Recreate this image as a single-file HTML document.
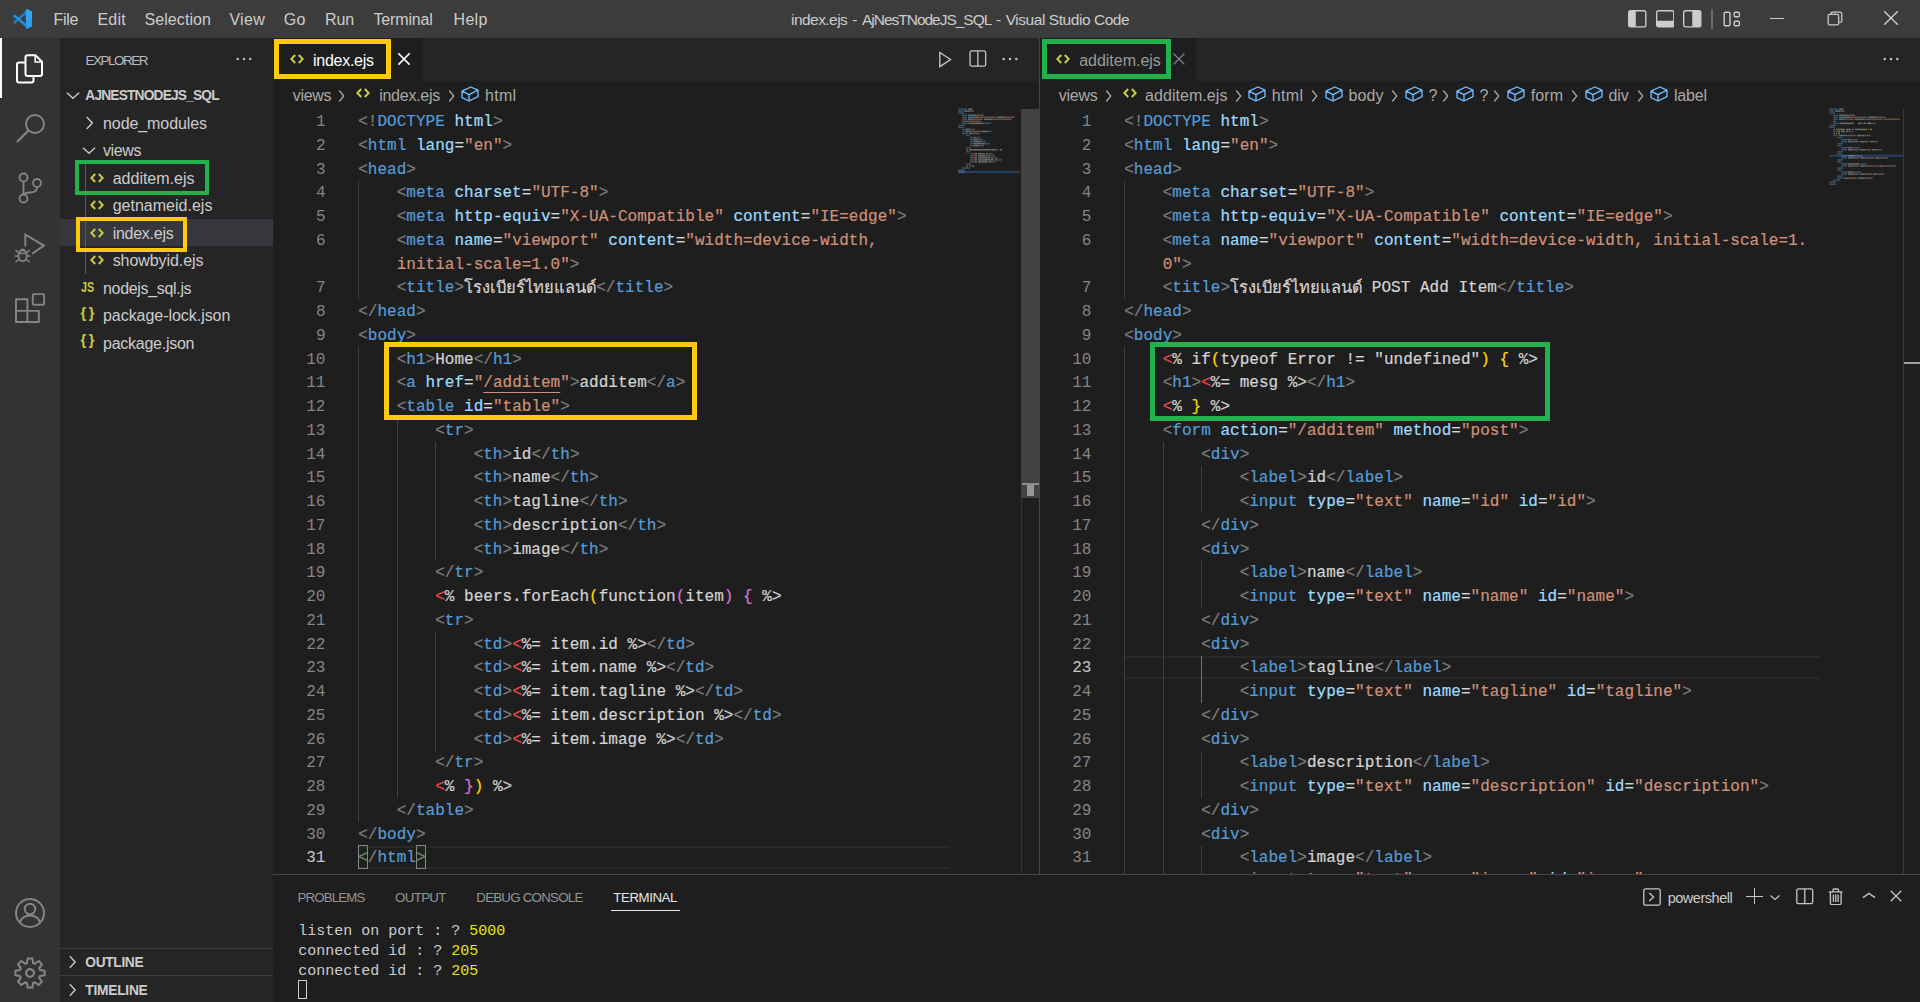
<!DOCTYPE html>
<html lang="en"><head><meta charset="utf-8"><title>index.ejs - AjNesTNodeJS_SQL - Visual Studio Code</title>
<style>
*{box-sizing:border-box;margin:0;padding:0}
html,body{width:1920px;height:1002px;overflow:hidden;background:#1e1e1e}
body{position:relative;font-family:"Liberation Sans",sans-serif;color:#ccc}
.abs{position:absolute;display:block}
.t{position:absolute;white-space:pre;font-family:"Liberation Sans",sans-serif}
.ed{position:absolute;overflow:hidden;background:#1e1e1e}
.cl{-webkit-text-stroke:0.2px;position:absolute;white-space:pre;font-family:"Liberation Mono",monospace;font-size:16px;line-height:23.75px;height:23.75px;letter-spacing:0.018px;color:#d4d4d4}
.ln{position:absolute;white-space:pre;font-family:"Liberation Mono",monospace;font-size:16px;line-height:23.75px;height:23.75px;letter-spacing:0.018px;text-align:right}
.th{display:inline-block;width:132.2px;height:23.75px;overflow:hidden;vertical-align:top;white-space:nowrap;letter-spacing:0;font-size:16.5px;line-height:23.75px}
.lk{text-decoration:underline;text-underline-offset:5px;text-decoration-thickness:1px}
.bm{display:inline-block;vertical-align:top;height:24px;margin-top:-2.6px;padding-top:2.6px;line-height:23.75px;outline:1px solid #888;outline-offset:-1px;background:rgba(0,100,0,.1)}
.tm{position:absolute;white-space:pre;font-family:"Liberation Mono",monospace;font-size:15px;line-height:20px;color:#ccc}
.box{position:absolute;border:5px solid #ffc90e}
.box.g{border-color:#22b14c}
</style></head><body>

<div class="abs" style="left:0;top:0;width:1920px;height:38px;background:#3c3c3c"></div>
<svg class="abs" style="left:11.7px;top:8.75px;" width="20.4" height="20" viewBox="0 0 245 240"><path d="M172 40 L22 168" stroke="#1a7fc8" stroke-width="31" fill="none"/><path d="M172 200 L22 76" stroke="#2490e0" stroke-width="31" fill="none"/><path d="M180 0 L245 33 V208 L180 240 L166 230 V10 Z" fill="#2d9ff0"/><path d="M180 0 L245 33 V120 L166 120 V10 Z" fill="#3aa8f5" opacity="0.6"/></svg>
<span class="t" style="left:53.40px;top:10.00px;font-size:16px;line-height:20px;color:#cccccc;letter-spacing:-0.245px;">File</span>
<span class="t" style="left:97.40px;top:10.00px;font-size:16px;line-height:20px;color:#cccccc;letter-spacing:0.232px;">Edit</span>
<span class="t" style="left:144.50px;top:10.00px;font-size:16px;line-height:20px;color:#cccccc;letter-spacing:0.076px;">Selection</span>
<span class="t" style="left:229.40px;top:10.00px;font-size:16px;line-height:20px;color:#cccccc;letter-spacing:0.330px;">View</span>
<span class="t" style="left:283.80px;top:10.00px;font-size:16px;line-height:20px;color:#cccccc;letter-spacing:0.228px;">Go</span>
<span class="t" style="left:325.00px;top:10.00px;font-size:16px;line-height:20px;color:#cccccc;letter-spacing:-0.117px;">Run</span>
<span class="t" style="left:373.40px;top:10.00px;font-size:16px;line-height:20px;color:#cccccc;letter-spacing:-0.142px;">Terminal</span>
<span class="t" style="left:453.60px;top:10.00px;font-size:16px;line-height:20px;color:#cccccc;letter-spacing:0.273px;">Help</span>
<span class="t" style="left:791.00px;top:10.00px;font-size:15.5px;line-height:20px;color:#cccccc;letter-spacing:-0.542px;">index.ejs</span>
<span class="t" style="left:852.20px;top:10.00px;font-size:15.5px;line-height:20px;color:#cccccc;letter-spacing:-0.162px;">-</span>
<span class="t" style="left:862.00px;top:10.00px;font-size:15.5px;line-height:20px;color:#cccccc;letter-spacing:-1.018px;">AjNesTNodeJS_SQL</span>
<span class="t" style="left:996.00px;top:10.00px;font-size:15.5px;line-height:20px;color:#cccccc;letter-spacing:-0.162px;">-</span>
<span class="t" style="left:1005.70px;top:10.00px;font-size:15.5px;line-height:20px;color:#cccccc;letter-spacing:-0.446px;">Visual Studio Code</span>
<svg class="abs" style="left:1628.3px;top:10.1px;" width="18.5" height="17.7" viewBox="0 0 19 18"><rect x="0.7" y="0.7" width="17.6" height="16.6" rx="2" fill="none" stroke="#cccccc" stroke-width="1.4"/><path d="M0.7 2.5 Q0.7 0.7 2.5 0.7 H8 V17.3 H2.5 Q0.7 17.3 0.7 15.5Z" fill="#cccccc"/></svg>
<svg class="abs" style="left:1655.8px;top:10.1px;" width="18.5" height="17.7" viewBox="0 0 19 18"><rect x="0.7" y="0.7" width="17.6" height="16.6" rx="2" fill="none" stroke="#cccccc" stroke-width="1.4"/><path d="M0.7 11 H18.3 V15.5 Q18.3 17.3 16.5 17.3 H2.5 Q0.7 17.3 0.7 15.5Z" fill="#cccccc"/></svg>
<svg class="abs" style="left:1683.4px;top:10.1px;" width="18.5" height="17.7" viewBox="0 0 19 18"><rect x="0.7" y="0.7" width="17.6" height="16.6" rx="2" fill="none" stroke="#cccccc" stroke-width="1.4"/><path d="M9.5 0.7 H16.5 Q18.3 0.7 18.3 2.5 V15.5 Q18.3 17.3 16.5 17.3 H9.5Z" fill="#cccccc"/></svg>
<div class="abs" style="left:1711px;top:9px;width:1.5px;height:20px;background:#6b6b6b"></div>
<svg class="abs" style="left:1723px;top:11px;" width="18" height="16" viewBox="0 0 18 16"><rect x="1.2" y="1.2" width="5.8" height="13.6" rx="1.3" fill="none" stroke="#cccccc" stroke-width="1.4"/><rect x="11.2" y="1.2" width="5.2" height="4.6" rx="1.2" fill="none" stroke="#cccccc" stroke-width="1.4"/><rect x="11.2" y="10.2" width="5.2" height="4.6" rx="1.2" fill="none" stroke="#cccccc" stroke-width="1.4"/></svg>
<div class="abs" style="left:1770px;top:18px;width:14px;height:1.3px;background:#ccc"></div>
<svg class="abs" style="left:1826.6px;top:11.2px;" width="16" height="15" viewBox="0 0 17 16"><rect x="1.2" y="3.6" width="11.2" height="11.2" rx="1.5" fill="none" stroke="#cccccc" stroke-width="1.3"/><path d="M4.2 3.4 V2.6 Q4.2 1.1 5.7 1.1 H14 Q15.7 1.1 15.7 2.8 V10.6 Q15.7 12 14.3 12 H12.6" fill="none" stroke="#cccccc" stroke-width="1.3"/></svg>
<svg class="abs" style="left:1881.3px;top:8.2px;" width="20" height="20" viewBox="0 0 20 20"><path d="M3.2 3.2 L16.8 16.8 M16.8 3.2 L3.2 16.8" fill="none" stroke="#d0d0d0" stroke-width="1.35"/></svg>
<div class="abs" style="left:0;top:38px;width:60px;height:964px;background:#333333"></div>
<div class="abs" style="left:0;top:38px;width:2px;height:60px;background:#ffffff"></div>
<svg class="abs" style="left:15px;top:54px;" width="29" height="30" viewBox="0 0 29 30"><path d="M10.5 7.5 V3.2 Q10.5 1.2 12.5 1.2 H20.5 L27 7.7 V20 Q27 22 25 22 H12.5 Q10.5 22 10.5 20 V7.5" fill="none" stroke="#fff" stroke-width="2"/><path d="M20.2 1.5 V8 H26.8" fill="none" stroke="#fff" stroke-width="1.6"/><path d="M10.2 8.5 H4 Q2 8.5 2 10.5 V26.5 Q2 28.5 4 28.5 H16.5 Q18.5 28.5 18.5 26.5 V22.3" fill="none" stroke="#fff" stroke-width="2"/></svg>
<svg class="abs" style="left:15px;top:112px;" width="32" height="32" viewBox="0 0 32 32"><circle cx="20" cy="12" r="9" fill="none" stroke="#858585" stroke-width="2"/><path d="M13.6 18.4 L2 30" stroke="#858585" stroke-width="2.2" fill="none"/></svg>
<svg class="abs" style="left:17px;top:172px;" width="26" height="32" viewBox="0 0 26 32"><circle cx="6.5" cy="5.5" r="4" fill="none" stroke="#858585" stroke-width="1.8"/><circle cx="6.5" cy="26.5" r="4" fill="none" stroke="#858585" stroke-width="1.8"/><circle cx="20" cy="11" r="4" fill="none" stroke="#858585" stroke-width="1.8"/><path d="M6.5 9.5 V22.5 M20 15 Q20 20.5 13 20.5 Q8 20.5 7 23" fill="none" stroke="#858585" stroke-width="1.8"/></svg>
<svg class="abs" style="left:14px;top:233px;" width="32" height="32" viewBox="0 0 32 32"><path d="M11.3 13.5 V1.6 L30 12.6 L18.3 20.6" fill="none" stroke="#858585" stroke-width="1.9" stroke-linejoin="miter"/><ellipse cx="8.6" cy="22.8" rx="4.1" ry="5.4" fill="none" stroke="#858585" stroke-width="1.7"/><path d="M4.8 20.6 H12.4 M0.8 23 H4.5 M12.7 23 H16.4 M1.6 17.2 L4.9 19.8 M15.6 17.2 L12.3 19.8 M1.6 29 L4.9 26.6 M15.6 29 L12.3 26.6 M5.8 17.8 Q8.6 14.8 11.4 17.8" fill="none" stroke="#858585" stroke-width="1.5"/></svg>
<svg class="abs" style="left:14px;top:292px;" width="32" height="32" viewBox="0 0 32 32"><path d="M2 7.3 H13.4 V18.9 H24.8 V30 H2 Z M2 18.9 H13.4 V30" fill="none" stroke="#858585" stroke-width="1.9" stroke-linejoin="round"/><rect x="18.8" y="2.1" width="11.3" height="10.6" rx="1.3" fill="none" stroke="#858585" stroke-width="1.9"/></svg>
<svg class="abs" style="left:14px;top:897px;" width="32" height="32" viewBox="0 0 32 32"><circle cx="16" cy="16" r="14" fill="none" stroke="#858585" stroke-width="2"/><circle cx="16" cy="12" r="5.3" fill="none" stroke="#858585" stroke-width="2"/><path d="M6 25.5 Q8 18.5 16 18.5 Q24 18.5 26 25.5" fill="none" stroke="#858585" stroke-width="2"/></svg>
<svg class="abs" style="left:13.8px;top:956.8px;" width="32" height="32" viewBox="0 0 32 32"><path d="M12.93 6.06 L13.64 1.39 L18.36 1.39 L19.07 6.06 L20.85 6.80 L24.66 4.00 L28.00 7.34 L25.20 11.15 L25.94 12.93 L30.61 13.64 L30.61 18.36 L25.94 19.07 L25.20 20.85 L28.00 24.66 L24.66 28.00 L20.85 25.20 L19.07 25.94 L18.36 30.61 L13.64 30.61 L12.93 25.94 L11.15 25.20 L7.34 28.00 L4.00 24.66 L6.80 20.85 L6.06 19.07 L1.39 18.36 L1.39 13.64 L6.06 12.93 L6.80 11.15 L4.00 7.34 L7.34 4.00 L11.15 6.80Z" fill="none" stroke="#858585" stroke-width="2" stroke-linejoin="round"/><circle cx="16" cy="16" r="3.9" fill="none" stroke="#858585" stroke-width="2.2"/></svg>
<div class="abs" style="left:60px;top:38px;width:213px;height:964px;background:#252526"></div>
<span class="t" style="left:85.50px;top:51.00px;font-size:13.5px;line-height:20px;color:#bbbbbb;letter-spacing:-1.503px;">EXPLORER</span>
<svg class="abs" style="left:229.2px;top:54.3px;" width="30" height="10" viewBox="0 0 30 10"><circle cx="8.8" cy="5" r="1.2" fill="#c5c5c5"/><circle cx="15.0" cy="5" r="1.2" fill="#c5c5c5"/><circle cx="21.2" cy="5" r="1.2" fill="#c5c5c5"/></svg>
<svg class="abs" style="left:62.5px;top:85.0px;" width="20" height="20" viewBox="0 0 20 20"><path d="M3.9000000000000004 7.7 L10 13.3 L16.1 7.7" fill="none" stroke="#c5c5c5" stroke-width="1.5"/></svg>
<span class="t" style="left:85.30px;top:86.00px;font-size:13.75px;line-height:20px;color:#cccccc;letter-spacing:-0.825px;font-weight:bold;">AJNESTNODEJS_SQL</span>
<div class="abs" style="left:60px;top:219.3px;width:213px;height:27.2px;background:#37373d"></div>
<div class="abs" style="left:85px;top:164px;width:1px;height:110px;background:#585858"></div>
<svg class="abs" style="left:79.3px;top:113.3px;" width="20" height="20" viewBox="0 0 20 20"><path d="M7.7 4.1 L13.3 10 L7.7 15.9" fill="none" stroke="#c5c5c5" stroke-width="1.5"/></svg>
<span class="t" style="left:103.00px;top:114.00px;font-size:16px;line-height:20px;color:#cccccc;letter-spacing:-0.081px;">node_modules</span>
<svg class="abs" style="left:79.3px;top:140.3px;" width="20" height="20" viewBox="0 0 20 20"><path d="M3.9000000000000004 7.7 L10 13.3 L16.1 7.7" fill="none" stroke="#c5c5c5" stroke-width="1.5"/></svg>
<span class="t" style="left:103.00px;top:141.00px;font-size:16px;line-height:20px;color:#cccccc;letter-spacing:-0.402px;">views</span>
<svg class="abs" style="left:89.7px;top:172.7px;" width="14.0" height="10.0" viewBox="0 0 14 10"><path d="M5.2 1 L1.3 5 L5.2 9 M8.8 1 L12.7 5 L8.8 9" fill="none" stroke="#cbcb41" stroke-width="2"/></svg>
<span class="t" style="left:112.70px;top:169.00px;font-size:16px;line-height:20px;color:#cccccc;letter-spacing:-0.002px;">additem.ejs</span>
<svg class="abs" style="left:89.7px;top:200.0px;" width="14.0" height="10.0" viewBox="0 0 14 10"><path d="M5.2 1 L1.3 5 L5.2 9 M8.8 1 L12.7 5 L8.8 9" fill="none" stroke="#cbcb41" stroke-width="2"/></svg>
<span class="t" style="left:112.70px;top:196.00px;font-size:16px;line-height:20px;color:#cccccc;letter-spacing:0.006px;">getnameid.ejs</span>
<svg class="abs" style="left:89.7px;top:227.5px;" width="14.0" height="10.0" viewBox="0 0 14 10"><path d="M5.2 1 L1.3 5 L5.2 9 M8.8 1 L12.7 5 L8.8 9" fill="none" stroke="#cbcb41" stroke-width="2"/></svg>
<span class="t" style="left:112.70px;top:224.00px;font-size:16px;line-height:20px;color:#cccccc;letter-spacing:-0.272px;">index.ejs</span>
<svg class="abs" style="left:89.7px;top:255.0px;" width="14.0" height="10.0" viewBox="0 0 14 10"><path d="M5.2 1 L1.3 5 L5.2 9 M8.8 1 L12.7 5 L8.8 9" fill="none" stroke="#cbcb41" stroke-width="2"/></svg>
<span class="t" style="left:112.70px;top:251.00px;font-size:16px;line-height:20px;color:#cccccc;letter-spacing:-0.067px;">showbyid.ejs</span>
<span class="t" style="left:81.00px;top:277.00px;font-size:14.5px;line-height:20px;color:#cbcb41;letter-spacing:0.000px;font-weight:bold;transform-origin:0 50%;transform:scaleX(.74);">JS</span>
<span class="t" style="left:103.00px;top:279.00px;font-size:16px;line-height:20px;color:#cccccc;letter-spacing:-0.323px;">nodejs_sql.js</span>
<span class="t" style="left:80.60px;top:303.00px;font-size:14.5px;line-height:20px;color:#cbcb41;letter-spacing:1.257px;font-weight:bold;letter-spacing:2.5px;">{}</span>
<span class="t" style="left:103.00px;top:306.00px;font-size:16px;line-height:20px;color:#cccccc;letter-spacing:-0.045px;">package-lock.json</span>
<span class="t" style="left:80.60px;top:330.00px;font-size:14.5px;line-height:20px;color:#cbcb41;letter-spacing:1.257px;font-weight:bold;letter-spacing:2.5px;">{}</span>
<span class="t" style="left:103.00px;top:334.00px;font-size:16px;line-height:20px;color:#cccccc;letter-spacing:-0.257px;">package.json</span>
<div class="abs" style="left:60px;top:948px;width:213px;height:1px;background:#3c3c3c"></div>
<div class="abs" style="left:60px;top:975px;width:213px;height:1px;background:#3c3c3c"></div>
<svg class="abs" style="left:62.400000000000006px;top:952px;" width="20" height="20" viewBox="0 0 20 20"><path d="M7.85 4.2 L13.15 10 L7.85 15.8" fill="none" stroke="#c5c5c5" stroke-width="1.4"/></svg>
<span class="t" style="left:85.30px;top:953.00px;font-size:13.75px;line-height:20px;color:#cccccc;letter-spacing:-0.335px;font-weight:bold;">OUTLINE</span>
<svg class="abs" style="left:62.400000000000006px;top:979.6px;" width="20" height="20" viewBox="0 0 20 20"><path d="M7.85 4.2 L13.15 10 L7.85 15.8" fill="none" stroke="#c5c5c5" stroke-width="1.4"/></svg>
<span class="t" style="left:85.30px;top:981.00px;font-size:13.75px;line-height:20px;color:#cccccc;letter-spacing:-0.246px;font-weight:bold;">TIMELINE</span>
<div class="abs" style="left:273px;top:38px;width:766px;height:43px;background:#252526"></div>
<div class="abs" style="left:273px;top:38px;width:149px;height:43px;background:#1e1e1e"></div>
<svg class="abs" style="left:290.0px;top:54.3px;" width="14.0" height="10.0" viewBox="0 0 14 10"><path d="M5.2 1 L1.3 5 L5.2 9 M8.8 1 L12.7 5 L8.8 9" fill="none" stroke="#cbcb41" stroke-width="2"/></svg>
<span class="t" style="left:313.00px;top:51.00px;font-size:16px;line-height:20px;color:#ffffff;letter-spacing:-0.272px;">index.ejs</span>
<svg class="abs" style="left:394px;top:49.3px;" width="20" height="20" viewBox="0 0 20 20"><path d="M4.4 4.4 L15.6 15.6 M15.6 4.4 L4.4 15.6" fill="none" stroke="#ffffff" stroke-width="1.5"/></svg>
<svg class="abs" style="left:937.8px;top:50.8px;" width="14.4" height="17.1" viewBox="0 0 16 19"><path d="M2 1.6 L14 9.5 L2 17.4 Z" fill="none" stroke="#c5c5c5" stroke-width="1.5" stroke-linejoin="miter"/></svg>
<svg class="abs" style="left:969.3px;top:49.8px;" width="17.7" height="17.5" viewBox="0 0 18.5 18.5"><rect x="1" y="1" width="16.5" height="16" rx="1.8" fill="none" stroke="#c5c5c5" stroke-width="1.4"/><path d="M9.25 1 V17" stroke="#c5c5c5" stroke-width="1.4"/></svg>
<svg class="abs" style="left:995.2px;top:54.2px;" width="30" height="10" viewBox="0 0 30 10"><circle cx="8.7" cy="5" r="1.25" fill="#c5c5c5"/><circle cx="15.0" cy="5" r="1.25" fill="#c5c5c5"/><circle cx="21.3" cy="5" r="1.25" fill="#c5c5c5"/></svg>
<span class="t" style="left:292.80px;top:86.00px;font-size:16px;line-height:20px;color:#a9a9a9;letter-spacing:-0.322px;">views</span>
<svg class="abs" style="left:331.3px;top:85.5px;" width="20" height="20" viewBox="0 0 20 20"><path d="M8.25 4.5 L12.75 10 L8.25 15.5" fill="none" stroke="#a9a9a9" stroke-width="1.3"/></svg>
<svg class="abs" style="left:356.3px;top:87.8px;" width="14.0" height="10.0" viewBox="0 0 14 10"><path d="M5.2 1 L1.3 5 L5.2 9 M8.8 1 L12.7 5 L8.8 9" fill="none" stroke="#cbcb41" stroke-width="2"/></svg>
<span class="t" style="left:379.20px;top:86.00px;font-size:16px;line-height:20px;color:#a9a9a9;letter-spacing:-0.261px;">index.ejs</span>
<svg class="abs" style="left:440.6px;top:85.5px;" width="20" height="20" viewBox="0 0 20 20"><path d="M8.25 4.5 L12.75 10 L8.25 15.5" fill="none" stroke="#a9a9a9" stroke-width="1.3"/></svg>
<svg class="abs" style="left:461.3px;top:86px;" width="18" height="16" viewBox="0 0 18 16"><path d="M1 5.2 L9.8 1 L17 4.2 L17 10.6 L8 15 L1 11.6 Z M1 5.2 L8 8.6 L17 4.2 M8 8.6 L8 15" fill="none" stroke="#75beff" stroke-width="1.35" stroke-linejoin="round"/></svg>
<span class="t" style="left:485.00px;top:86.00px;font-size:16px;line-height:20px;color:#a9a9a9;letter-spacing:0.268px;">html</span>
<div class="ed" style="left:273px;top:109.25px;width:766px;height:765.25px">
<div class="abs" style="left:86px;top:736.25px;width:591px;height:23.75px;border-top:2px solid #282828;border-bottom:2px solid #282828"></div>
<div class="abs" style="left:85.30px;top:71.25px;width:1px;height:118.75px;background:#404040"></div><div class="abs" style="left:85.30px;top:237.50px;width:1px;height:475.00px;background:#404040"></div><div class="abs" style="left:123.78px;top:308.75px;width:1px;height:380.00px;background:#404040"></div><div class="abs" style="left:162.26px;top:332.50px;width:1px;height:118.75px;background:#404040"></div><div class="abs" style="left:162.26px;top:522.50px;width:1px;height:118.75px;background:#404040"></div>
<div class="ln" style="top:1.75px;right:713.5px;color:#858585">1</div><div class="cl" style="top:1.75px;left:85.20px"><span style="color:#808080">&lt;!</span><span style="color:#569cd6">DOCTYPE</span><span style="color:#9cdcfe"> html</span><span style="color:#808080">&gt;</span></div><div class="ln" style="top:25.50px;right:713.5px;color:#858585">2</div><div class="cl" style="top:25.50px;left:85.20px"><span style="color:#808080">&lt;</span><span style="color:#569cd6">html</span><span style="color:#d4d4d4"> </span><span style="color:#9cdcfe">lang</span><span style="color:#d4d4d4">=</span><span style="color:#ce9178">&quot;en&quot;</span><span style="color:#808080">&gt;</span></div><div class="ln" style="top:49.25px;right:713.5px;color:#858585">3</div><div class="cl" style="top:49.25px;left:85.20px"><span style="color:#808080">&lt;</span><span style="color:#569cd6">head</span><span style="color:#808080">&gt;</span></div><div class="ln" style="top:73.00px;right:713.5px;color:#858585">4</div><div class="cl" style="top:73.00px;left:85.20px"><span style="color:#d4d4d4">    </span><span style="color:#808080">&lt;</span><span style="color:#569cd6">meta</span><span style="color:#d4d4d4"> </span><span style="color:#9cdcfe">charset</span><span style="color:#d4d4d4">=</span><span style="color:#ce9178">&quot;UTF-8&quot;</span><span style="color:#808080">&gt;</span></div><div class="ln" style="top:96.75px;right:713.5px;color:#858585">5</div><div class="cl" style="top:96.75px;left:85.20px"><span style="color:#d4d4d4">    </span><span style="color:#808080">&lt;</span><span style="color:#569cd6">meta</span><span style="color:#d4d4d4"> </span><span style="color:#9cdcfe">http-equiv</span><span style="color:#d4d4d4">=</span><span style="color:#ce9178">&quot;X-UA-Compatible&quot;</span><span style="color:#d4d4d4"> </span><span style="color:#9cdcfe">content</span><span style="color:#d4d4d4">=</span><span style="color:#ce9178">&quot;IE=edge&quot;</span><span style="color:#808080">&gt;</span></div><div class="ln" style="top:120.50px;right:713.5px;color:#858585">6</div><div class="cl" style="top:120.50px;left:85.20px"><span style="color:#d4d4d4">    </span><span style="color:#808080">&lt;</span><span style="color:#569cd6">meta</span><span style="color:#d4d4d4"> </span><span style="color:#9cdcfe">name</span><span style="color:#d4d4d4">=</span><span style="color:#ce9178">&quot;viewport&quot;</span><span style="color:#d4d4d4"> </span><span style="color:#9cdcfe">content</span><span style="color:#d4d4d4">=</span><span style="color:#ce9178">&quot;width=device-width, </span></div><div class="cl" style="top:144.25px;left:123.68px"><span style="color:#ce9178">initial-scale=1.0&quot;</span><span style="color:#808080">&gt;</span></div><div class="ln" style="top:168.00px;right:713.5px;color:#858585">7</div><div class="cl" style="top:168.00px;left:85.20px"><span style="color:#d4d4d4">    </span><span style="color:#808080">&lt;</span><span style="color:#569cd6">title</span><span style="color:#808080">&gt;</span><span class="th" style="color:#d4d4d4">โรงเบียร์ไทยแลนด์</span><span style="color:#808080">&lt;/</span><span style="color:#569cd6">title</span><span style="color:#808080">&gt;</span></div><div class="ln" style="top:191.75px;right:713.5px;color:#858585">8</div><div class="cl" style="top:191.75px;left:85.20px"><span style="color:#808080">&lt;/</span><span style="color:#569cd6">head</span><span style="color:#808080">&gt;</span></div><div class="ln" style="top:215.50px;right:713.5px;color:#858585">9</div><div class="cl" style="top:215.50px;left:85.20px"><span style="color:#808080">&lt;</span><span style="color:#569cd6">body</span><span style="color:#808080">&gt;</span></div><div class="ln" style="top:239.25px;right:713.5px;color:#858585">10</div><div class="cl" style="top:239.25px;left:85.20px"><span style="color:#d4d4d4">    </span><span style="color:#808080">&lt;</span><span style="color:#569cd6">h1</span><span style="color:#808080">&gt;</span><span style="color:#d4d4d4">Home</span><span style="color:#808080">&lt;/</span><span style="color:#569cd6">h1</span><span style="color:#808080">&gt;</span></div><div class="ln" style="top:263.00px;right:713.5px;color:#858585">11</div><div class="cl" style="top:263.00px;left:85.20px"><span style="color:#d4d4d4">    </span><span style="color:#808080">&lt;</span><span style="color:#569cd6">a</span><span style="color:#d4d4d4"> </span><span style="color:#9cdcfe">href</span><span style="color:#d4d4d4">=</span><span style="color:#ce9178">&quot;<span class="lk">/additem</span>&quot;</span><span style="color:#808080">&gt;</span><span style="color:#d4d4d4">additem</span><span style="color:#808080">&lt;/</span><span style="color:#569cd6">a</span><span style="color:#808080">&gt;</span></div><div class="ln" style="top:286.75px;right:713.5px;color:#858585">12</div><div class="cl" style="top:286.75px;left:85.20px"><span style="color:#d4d4d4">    </span><span style="color:#808080">&lt;</span><span style="color:#569cd6">table</span><span style="color:#d4d4d4"> </span><span style="color:#9cdcfe">id</span><span style="color:#d4d4d4">=</span><span style="color:#ce9178">&quot;table&quot;</span><span style="color:#808080">&gt;</span></div><div class="ln" style="top:310.50px;right:713.5px;color:#858585">13</div><div class="cl" style="top:310.50px;left:85.20px"><span style="color:#d4d4d4">        </span><span style="color:#808080">&lt;</span><span style="color:#569cd6">tr</span><span style="color:#808080">&gt;</span></div><div class="ln" style="top:334.25px;right:713.5px;color:#858585">14</div><div class="cl" style="top:334.25px;left:85.20px"><span style="color:#d4d4d4">            </span><span style="color:#808080">&lt;</span><span style="color:#569cd6">th</span><span style="color:#808080">&gt;</span><span style="color:#d4d4d4">id</span><span style="color:#808080">&lt;/</span><span style="color:#569cd6">th</span><span style="color:#808080">&gt;</span></div><div class="ln" style="top:358.00px;right:713.5px;color:#858585">15</div><div class="cl" style="top:358.00px;left:85.20px"><span style="color:#d4d4d4">            </span><span style="color:#808080">&lt;</span><span style="color:#569cd6">th</span><span style="color:#808080">&gt;</span><span style="color:#d4d4d4">name</span><span style="color:#808080">&lt;/</span><span style="color:#569cd6">th</span><span style="color:#808080">&gt;</span></div><div class="ln" style="top:381.75px;right:713.5px;color:#858585">16</div><div class="cl" style="top:381.75px;left:85.20px"><span style="color:#d4d4d4">            </span><span style="color:#808080">&lt;</span><span style="color:#569cd6">th</span><span style="color:#808080">&gt;</span><span style="color:#d4d4d4">tagline</span><span style="color:#808080">&lt;/</span><span style="color:#569cd6">th</span><span style="color:#808080">&gt;</span></div><div class="ln" style="top:405.50px;right:713.5px;color:#858585">17</div><div class="cl" style="top:405.50px;left:85.20px"><span style="color:#d4d4d4">            </span><span style="color:#808080">&lt;</span><span style="color:#569cd6">th</span><span style="color:#808080">&gt;</span><span style="color:#d4d4d4">description</span><span style="color:#808080">&lt;/</span><span style="color:#569cd6">th</span><span style="color:#808080">&gt;</span></div><div class="ln" style="top:429.25px;right:713.5px;color:#858585">18</div><div class="cl" style="top:429.25px;left:85.20px"><span style="color:#d4d4d4">            </span><span style="color:#808080">&lt;</span><span style="color:#569cd6">th</span><span style="color:#808080">&gt;</span><span style="color:#d4d4d4">image</span><span style="color:#808080">&lt;/</span><span style="color:#569cd6">th</span><span style="color:#808080">&gt;</span></div><div class="ln" style="top:453.00px;right:713.5px;color:#858585">19</div><div class="cl" style="top:453.00px;left:85.20px"><span style="color:#d4d4d4">        </span><span style="color:#808080">&lt;/</span><span style="color:#569cd6">tr</span><span style="color:#808080">&gt;</span></div><div class="ln" style="top:476.75px;right:713.5px;color:#858585">20</div><div class="cl" style="top:476.75px;left:85.20px"><span style="color:#d4d4d4">        </span><span style="color:#f44747">&lt;</span><span style="color:#d4d4d4">% beers.forEach</span><span style="color:#ffd700">(</span><span style="color:#d4d4d4">function</span><span style="color:#da70d6">(</span><span style="color:#d4d4d4">item</span><span style="color:#da70d6">)</span><span style="color:#d4d4d4"> </span><span style="color:#da70d6">{</span><span style="color:#d4d4d4"> %&gt;</span></div><div class="ln" style="top:500.50px;right:713.5px;color:#858585">21</div><div class="cl" style="top:500.50px;left:85.20px"><span style="color:#d4d4d4">        </span><span style="color:#808080">&lt;</span><span style="color:#569cd6">tr</span><span style="color:#808080">&gt;</span></div><div class="ln" style="top:524.25px;right:713.5px;color:#858585">22</div><div class="cl" style="top:524.25px;left:85.20px"><span style="color:#d4d4d4">            </span><span style="color:#808080">&lt;</span><span style="color:#569cd6">td</span><span style="color:#808080">&gt;</span><span style="color:#f44747">&lt;</span><span style="color:#d4d4d4">%= item.id %&gt;</span><span style="color:#808080">&lt;/</span><span style="color:#569cd6">td</span><span style="color:#808080">&gt;</span></div><div class="ln" style="top:548.00px;right:713.5px;color:#858585">23</div><div class="cl" style="top:548.00px;left:85.20px"><span style="color:#d4d4d4">            </span><span style="color:#808080">&lt;</span><span style="color:#569cd6">td</span><span style="color:#808080">&gt;</span><span style="color:#f44747">&lt;</span><span style="color:#d4d4d4">%= item.name %&gt;</span><span style="color:#808080">&lt;/</span><span style="color:#569cd6">td</span><span style="color:#808080">&gt;</span></div><div class="ln" style="top:571.75px;right:713.5px;color:#858585">24</div><div class="cl" style="top:571.75px;left:85.20px"><span style="color:#d4d4d4">            </span><span style="color:#808080">&lt;</span><span style="color:#569cd6">td</span><span style="color:#808080">&gt;</span><span style="color:#f44747">&lt;</span><span style="color:#d4d4d4">%= item.tagline %&gt;</span><span style="color:#808080">&lt;/</span><span style="color:#569cd6">td</span><span style="color:#808080">&gt;</span></div><div class="ln" style="top:595.50px;right:713.5px;color:#858585">25</div><div class="cl" style="top:595.50px;left:85.20px"><span style="color:#d4d4d4">            </span><span style="color:#808080">&lt;</span><span style="color:#569cd6">td</span><span style="color:#808080">&gt;</span><span style="color:#f44747">&lt;</span><span style="color:#d4d4d4">%= item.description %&gt;</span><span style="color:#808080">&lt;/</span><span style="color:#569cd6">td</span><span style="color:#808080">&gt;</span></div><div class="ln" style="top:619.25px;right:713.5px;color:#858585">26</div><div class="cl" style="top:619.25px;left:85.20px"><span style="color:#d4d4d4">            </span><span style="color:#808080">&lt;</span><span style="color:#569cd6">td</span><span style="color:#808080">&gt;</span><span style="color:#f44747">&lt;</span><span style="color:#d4d4d4">%= item.image %&gt;</span><span style="color:#808080">&lt;/</span><span style="color:#569cd6">td</span><span style="color:#808080">&gt;</span></div><div class="ln" style="top:643.00px;right:713.5px;color:#858585">27</div><div class="cl" style="top:643.00px;left:85.20px"><span style="color:#d4d4d4">        </span><span style="color:#808080">&lt;/</span><span style="color:#569cd6">tr</span><span style="color:#808080">&gt;</span></div><div class="ln" style="top:666.75px;right:713.5px;color:#858585">28</div><div class="cl" style="top:666.75px;left:85.20px"><span style="color:#d4d4d4">        </span><span style="color:#f44747">&lt;</span><span style="color:#d4d4d4">% </span><span style="color:#da70d6">}</span><span style="color:#ffd700">)</span><span style="color:#d4d4d4"> %&gt;</span></div><div class="ln" style="top:690.50px;right:713.5px;color:#858585">29</div><div class="cl" style="top:690.50px;left:85.20px"><span style="color:#d4d4d4">    </span><span style="color:#808080">&lt;/</span><span style="color:#569cd6">table</span><span style="color:#808080">&gt;</span></div><div class="ln" style="top:714.25px;right:713.5px;color:#858585">30</div><div class="cl" style="top:714.25px;left:85.20px"><span style="color:#808080">&lt;/</span><span style="color:#569cd6">body</span><span style="color:#808080">&gt;</span></div><div class="ln" style="top:738.00px;right:713.5px;color:#c6c6c6">31</div><div class="cl" style="top:738.00px;left:85.20px"><span style="color:#808080"><span class="bm">&lt;</span>/</span><span style="color:#569cd6">html</span><span style="color:#808080"><span class="bm">&gt;</span></span></div>
</div>
<svg class="abs" style="left:958px;top:108.2px" width="62" height="90" viewBox="0 0 62 90"><rect x="0" y="62.93" width="62" height="2" fill="#264f78" opacity="0.75"/><rect x="0" y="0.40" width="2" height="1.5" fill="#808080" opacity="0.42"/><rect x="2" y="0.40" width="7" height="1.5" fill="#569cd6" opacity="0.42"/><rect x="10" y="0.40" width="4" height="1.5" fill="#9cdcfe" opacity="0.42"/><rect x="14" y="0.40" width="1" height="1.5" fill="#808080" opacity="0.42"/><rect x="0" y="2.43" width="1" height="1.5" fill="#808080" opacity="0.42"/><rect x="1" y="2.43" width="4" height="1.5" fill="#569cd6" opacity="0.42"/><rect x="6" y="2.43" width="4" height="1.5" fill="#9cdcfe" opacity="0.42"/><rect x="10" y="2.43" width="1" height="1.5" fill="#d4d4d4" opacity="0.42"/><rect x="11" y="2.43" width="4" height="1.5" fill="#ce9178" opacity="0.42"/><rect x="15" y="2.43" width="1" height="1.5" fill="#808080" opacity="0.42"/><rect x="0" y="4.46" width="1" height="1.5" fill="#808080" opacity="0.42"/><rect x="1" y="4.46" width="4" height="1.5" fill="#569cd6" opacity="0.42"/><rect x="5" y="4.46" width="1" height="1.5" fill="#808080" opacity="0.42"/><rect x="4" y="6.49" width="1" height="1.5" fill="#808080" opacity="0.42"/><rect x="5" y="6.49" width="4" height="1.5" fill="#569cd6" opacity="0.42"/><rect x="10" y="6.49" width="7" height="1.5" fill="#9cdcfe" opacity="0.42"/><rect x="17" y="6.49" width="1" height="1.5" fill="#d4d4d4" opacity="0.42"/><rect x="18" y="6.49" width="7" height="1.5" fill="#ce9178" opacity="0.42"/><rect x="25" y="6.49" width="1" height="1.5" fill="#808080" opacity="0.42"/><rect x="4" y="8.52" width="1" height="1.5" fill="#808080" opacity="0.42"/><rect x="5" y="8.52" width="4" height="1.5" fill="#569cd6" opacity="0.42"/><rect x="10" y="8.52" width="10" height="1.5" fill="#9cdcfe" opacity="0.42"/><rect x="20" y="8.52" width="1" height="1.5" fill="#d4d4d4" opacity="0.42"/><rect x="21" y="8.52" width="17" height="1.5" fill="#ce9178" opacity="0.42"/><rect x="39" y="8.52" width="7" height="1.5" fill="#9cdcfe" opacity="0.42"/><rect x="46" y="8.52" width="1" height="1.5" fill="#d4d4d4" opacity="0.42"/><rect x="47" y="8.52" width="9" height="1.5" fill="#ce9178" opacity="0.42"/><rect x="56" y="8.52" width="1" height="1.5" fill="#808080" opacity="0.42"/><rect x="4" y="10.55" width="1" height="1.5" fill="#808080" opacity="0.42"/><rect x="5" y="10.55" width="4" height="1.5" fill="#569cd6" opacity="0.42"/><rect x="10" y="10.55" width="4" height="1.5" fill="#9cdcfe" opacity="0.42"/><rect x="14" y="10.55" width="1" height="1.5" fill="#d4d4d4" opacity="0.42"/><rect x="15" y="10.55" width="10" height="1.5" fill="#ce9178" opacity="0.42"/><rect x="26" y="10.55" width="7" height="1.5" fill="#9cdcfe" opacity="0.42"/><rect x="33" y="10.55" width="1" height="1.5" fill="#d4d4d4" opacity="0.42"/><rect x="34" y="10.55" width="20" height="1.5" fill="#ce9178" opacity="0.42"/><rect x="4" y="12.58" width="18" height="1.5" fill="#ce9178" opacity="0.42"/><rect x="22" y="12.58" width="1" height="1.5" fill="#808080" opacity="0.42"/><rect x="4" y="14.61" width="1" height="1.5" fill="#808080" opacity="0.42"/><rect x="5" y="14.61" width="5" height="1.5" fill="#569cd6" opacity="0.42"/><rect x="10" y="14.61" width="1" height="1.5" fill="#808080" opacity="0.42"/><rect x="11" y="14.61" width="14" height="1.5" fill="#d4d4d4" opacity="0.42"/><rect x="25" y="14.61" width="2" height="1.5" fill="#808080" opacity="0.42"/><rect x="27" y="14.61" width="5" height="1.5" fill="#569cd6" opacity="0.42"/><rect x="32" y="14.61" width="1" height="1.5" fill="#808080" opacity="0.42"/><rect x="0" y="16.64" width="2" height="1.5" fill="#808080" opacity="0.42"/><rect x="2" y="16.64" width="4" height="1.5" fill="#569cd6" opacity="0.42"/><rect x="6" y="16.64" width="1" height="1.5" fill="#808080" opacity="0.42"/><rect x="0" y="18.67" width="1" height="1.5" fill="#808080" opacity="0.42"/><rect x="1" y="18.67" width="4" height="1.5" fill="#569cd6" opacity="0.42"/><rect x="5" y="18.67" width="1" height="1.5" fill="#808080" opacity="0.42"/><rect x="4" y="20.70" width="1" height="1.5" fill="#808080" opacity="0.42"/><rect x="5" y="20.70" width="2" height="1.5" fill="#569cd6" opacity="0.42"/><rect x="7" y="20.70" width="1" height="1.5" fill="#808080" opacity="0.42"/><rect x="8" y="20.70" width="4" height="1.5" fill="#d4d4d4" opacity="0.42"/><rect x="12" y="20.70" width="2" height="1.5" fill="#808080" opacity="0.42"/><rect x="14" y="20.70" width="2" height="1.5" fill="#569cd6" opacity="0.42"/><rect x="16" y="20.70" width="1" height="1.5" fill="#808080" opacity="0.42"/><rect x="4" y="22.73" width="1" height="1.5" fill="#808080" opacity="0.42"/><rect x="5" y="22.73" width="1" height="1.5" fill="#569cd6" opacity="0.42"/><rect x="7" y="22.73" width="4" height="1.5" fill="#9cdcfe" opacity="0.42"/><rect x="11" y="22.73" width="1" height="1.5" fill="#d4d4d4" opacity="0.42"/><rect x="12" y="22.73" width="10" height="1.5" fill="#ce9178" opacity="0.42"/><rect x="22" y="22.73" width="1" height="1.5" fill="#808080" opacity="0.42"/><rect x="23" y="22.73" width="7" height="1.5" fill="#d4d4d4" opacity="0.42"/><rect x="30" y="22.73" width="2" height="1.5" fill="#808080" opacity="0.42"/><rect x="32" y="22.73" width="1" height="1.5" fill="#569cd6" opacity="0.42"/><rect x="33" y="22.73" width="1" height="1.5" fill="#808080" opacity="0.42"/><rect x="4" y="24.76" width="1" height="1.5" fill="#808080" opacity="0.42"/><rect x="5" y="24.76" width="5" height="1.5" fill="#569cd6" opacity="0.42"/><rect x="11" y="24.76" width="2" height="1.5" fill="#9cdcfe" opacity="0.42"/><rect x="13" y="24.76" width="1" height="1.5" fill="#d4d4d4" opacity="0.42"/><rect x="14" y="24.76" width="7" height="1.5" fill="#ce9178" opacity="0.42"/><rect x="21" y="24.76" width="1" height="1.5" fill="#808080" opacity="0.42"/><rect x="8" y="26.79" width="1" height="1.5" fill="#808080" opacity="0.42"/><rect x="9" y="26.79" width="2" height="1.5" fill="#569cd6" opacity="0.42"/><rect x="11" y="26.79" width="1" height="1.5" fill="#808080" opacity="0.42"/><rect x="12" y="28.82" width="1" height="1.5" fill="#808080" opacity="0.42"/><rect x="13" y="28.82" width="2" height="1.5" fill="#569cd6" opacity="0.42"/><rect x="15" y="28.82" width="1" height="1.5" fill="#808080" opacity="0.42"/><rect x="16" y="28.82" width="2" height="1.5" fill="#d4d4d4" opacity="0.42"/><rect x="18" y="28.82" width="2" height="1.5" fill="#808080" opacity="0.42"/><rect x="20" y="28.82" width="2" height="1.5" fill="#569cd6" opacity="0.42"/><rect x="22" y="28.82" width="1" height="1.5" fill="#808080" opacity="0.42"/><rect x="12" y="30.85" width="1" height="1.5" fill="#808080" opacity="0.42"/><rect x="13" y="30.85" width="2" height="1.5" fill="#569cd6" opacity="0.42"/><rect x="15" y="30.85" width="1" height="1.5" fill="#808080" opacity="0.42"/><rect x="16" y="30.85" width="4" height="1.5" fill="#d4d4d4" opacity="0.42"/><rect x="20" y="30.85" width="2" height="1.5" fill="#808080" opacity="0.42"/><rect x="22" y="30.85" width="2" height="1.5" fill="#569cd6" opacity="0.42"/><rect x="24" y="30.85" width="1" height="1.5" fill="#808080" opacity="0.42"/><rect x="12" y="32.88" width="1" height="1.5" fill="#808080" opacity="0.42"/><rect x="13" y="32.88" width="2" height="1.5" fill="#569cd6" opacity="0.42"/><rect x="15" y="32.88" width="1" height="1.5" fill="#808080" opacity="0.42"/><rect x="16" y="32.88" width="7" height="1.5" fill="#d4d4d4" opacity="0.42"/><rect x="23" y="32.88" width="2" height="1.5" fill="#808080" opacity="0.42"/><rect x="25" y="32.88" width="2" height="1.5" fill="#569cd6" opacity="0.42"/><rect x="27" y="32.88" width="1" height="1.5" fill="#808080" opacity="0.42"/><rect x="12" y="34.91" width="1" height="1.5" fill="#808080" opacity="0.42"/><rect x="13" y="34.91" width="2" height="1.5" fill="#569cd6" opacity="0.42"/><rect x="15" y="34.91" width="1" height="1.5" fill="#808080" opacity="0.42"/><rect x="16" y="34.91" width="11" height="1.5" fill="#d4d4d4" opacity="0.42"/><rect x="27" y="34.91" width="2" height="1.5" fill="#808080" opacity="0.42"/><rect x="29" y="34.91" width="2" height="1.5" fill="#569cd6" opacity="0.42"/><rect x="31" y="34.91" width="1" height="1.5" fill="#808080" opacity="0.42"/><rect x="12" y="36.94" width="1" height="1.5" fill="#808080" opacity="0.42"/><rect x="13" y="36.94" width="2" height="1.5" fill="#569cd6" opacity="0.42"/><rect x="15" y="36.94" width="1" height="1.5" fill="#808080" opacity="0.42"/><rect x="16" y="36.94" width="5" height="1.5" fill="#d4d4d4" opacity="0.42"/><rect x="21" y="36.94" width="2" height="1.5" fill="#808080" opacity="0.42"/><rect x="23" y="36.94" width="2" height="1.5" fill="#569cd6" opacity="0.42"/><rect x="25" y="36.94" width="1" height="1.5" fill="#808080" opacity="0.42"/><rect x="8" y="38.97" width="2" height="1.5" fill="#808080" opacity="0.42"/><rect x="10" y="38.97" width="2" height="1.5" fill="#569cd6" opacity="0.42"/><rect x="12" y="38.97" width="1" height="1.5" fill="#808080" opacity="0.42"/><rect x="8" y="41.00" width="1" height="1.5" fill="#f44747" opacity="0.42"/><rect x="9" y="41.00" width="1" height="1.5" fill="#d4d4d4" opacity="0.42"/><rect x="11" y="41.00" width="13" height="1.5" fill="#d4d4d4" opacity="0.42"/><rect x="24" y="41.00" width="1" height="1.5" fill="#ffd700" opacity="0.42"/><rect x="25" y="41.00" width="8" height="1.5" fill="#d4d4d4" opacity="0.42"/><rect x="33" y="41.00" width="1" height="1.5" fill="#da70d6" opacity="0.42"/><rect x="34" y="41.00" width="4" height="1.5" fill="#d4d4d4" opacity="0.42"/><rect x="38" y="41.00" width="1" height="1.5" fill="#da70d6" opacity="0.42"/><rect x="40" y="41.00" width="1" height="1.5" fill="#da70d6" opacity="0.42"/><rect x="42" y="41.00" width="2" height="1.5" fill="#d4d4d4" opacity="0.42"/><rect x="8" y="43.03" width="1" height="1.5" fill="#808080" opacity="0.42"/><rect x="9" y="43.03" width="2" height="1.5" fill="#569cd6" opacity="0.42"/><rect x="11" y="43.03" width="1" height="1.5" fill="#808080" opacity="0.42"/><rect x="12" y="45.06" width="1" height="1.5" fill="#808080" opacity="0.42"/><rect x="13" y="45.06" width="2" height="1.5" fill="#569cd6" opacity="0.42"/><rect x="15" y="45.06" width="1" height="1.5" fill="#808080" opacity="0.42"/><rect x="16" y="45.06" width="1" height="1.5" fill="#f44747" opacity="0.42"/><rect x="17" y="45.06" width="2" height="1.5" fill="#d4d4d4" opacity="0.42"/><rect x="20" y="45.06" width="7" height="1.5" fill="#d4d4d4" opacity="0.42"/><rect x="28" y="45.06" width="2" height="1.5" fill="#d4d4d4" opacity="0.42"/><rect x="30" y="45.06" width="2" height="1.5" fill="#808080" opacity="0.42"/><rect x="32" y="45.06" width="2" height="1.5" fill="#569cd6" opacity="0.42"/><rect x="34" y="45.06" width="1" height="1.5" fill="#808080" opacity="0.42"/><rect x="12" y="47.09" width="1" height="1.5" fill="#808080" opacity="0.42"/><rect x="13" y="47.09" width="2" height="1.5" fill="#569cd6" opacity="0.42"/><rect x="15" y="47.09" width="1" height="1.5" fill="#808080" opacity="0.42"/><rect x="16" y="47.09" width="1" height="1.5" fill="#f44747" opacity="0.42"/><rect x="17" y="47.09" width="2" height="1.5" fill="#d4d4d4" opacity="0.42"/><rect x="20" y="47.09" width="9" height="1.5" fill="#d4d4d4" opacity="0.42"/><rect x="30" y="47.09" width="2" height="1.5" fill="#d4d4d4" opacity="0.42"/><rect x="32" y="47.09" width="2" height="1.5" fill="#808080" opacity="0.42"/><rect x="34" y="47.09" width="2" height="1.5" fill="#569cd6" opacity="0.42"/><rect x="36" y="47.09" width="1" height="1.5" fill="#808080" opacity="0.42"/><rect x="12" y="49.12" width="1" height="1.5" fill="#808080" opacity="0.42"/><rect x="13" y="49.12" width="2" height="1.5" fill="#569cd6" opacity="0.42"/><rect x="15" y="49.12" width="1" height="1.5" fill="#808080" opacity="0.42"/><rect x="16" y="49.12" width="1" height="1.5" fill="#f44747" opacity="0.42"/><rect x="17" y="49.12" width="2" height="1.5" fill="#d4d4d4" opacity="0.42"/><rect x="20" y="49.12" width="12" height="1.5" fill="#d4d4d4" opacity="0.42"/><rect x="33" y="49.12" width="2" height="1.5" fill="#d4d4d4" opacity="0.42"/><rect x="35" y="49.12" width="2" height="1.5" fill="#808080" opacity="0.42"/><rect x="37" y="49.12" width="2" height="1.5" fill="#569cd6" opacity="0.42"/><rect x="39" y="49.12" width="1" height="1.5" fill="#808080" opacity="0.42"/><rect x="12" y="51.15" width="1" height="1.5" fill="#808080" opacity="0.42"/><rect x="13" y="51.15" width="2" height="1.5" fill="#569cd6" opacity="0.42"/><rect x="15" y="51.15" width="1" height="1.5" fill="#808080" opacity="0.42"/><rect x="16" y="51.15" width="1" height="1.5" fill="#f44747" opacity="0.42"/><rect x="17" y="51.15" width="2" height="1.5" fill="#d4d4d4" opacity="0.42"/><rect x="20" y="51.15" width="16" height="1.5" fill="#d4d4d4" opacity="0.42"/><rect x="37" y="51.15" width="2" height="1.5" fill="#d4d4d4" opacity="0.42"/><rect x="39" y="51.15" width="2" height="1.5" fill="#808080" opacity="0.42"/><rect x="41" y="51.15" width="2" height="1.5" fill="#569cd6" opacity="0.42"/><rect x="43" y="51.15" width="1" height="1.5" fill="#808080" opacity="0.42"/><rect x="12" y="53.18" width="1" height="1.5" fill="#808080" opacity="0.42"/><rect x="13" y="53.18" width="2" height="1.5" fill="#569cd6" opacity="0.42"/><rect x="15" y="53.18" width="1" height="1.5" fill="#808080" opacity="0.42"/><rect x="16" y="53.18" width="1" height="1.5" fill="#f44747" opacity="0.42"/><rect x="17" y="53.18" width="2" height="1.5" fill="#d4d4d4" opacity="0.42"/><rect x="20" y="53.18" width="10" height="1.5" fill="#d4d4d4" opacity="0.42"/><rect x="31" y="53.18" width="2" height="1.5" fill="#d4d4d4" opacity="0.42"/><rect x="33" y="53.18" width="2" height="1.5" fill="#808080" opacity="0.42"/><rect x="35" y="53.18" width="2" height="1.5" fill="#569cd6" opacity="0.42"/><rect x="37" y="53.18" width="1" height="1.5" fill="#808080" opacity="0.42"/><rect x="8" y="55.21" width="2" height="1.5" fill="#808080" opacity="0.42"/><rect x="10" y="55.21" width="2" height="1.5" fill="#569cd6" opacity="0.42"/><rect x="12" y="55.21" width="1" height="1.5" fill="#808080" opacity="0.42"/><rect x="8" y="57.24" width="1" height="1.5" fill="#f44747" opacity="0.42"/><rect x="9" y="57.24" width="1" height="1.5" fill="#d4d4d4" opacity="0.42"/><rect x="11" y="57.24" width="1" height="1.5" fill="#da70d6" opacity="0.42"/><rect x="12" y="57.24" width="1" height="1.5" fill="#ffd700" opacity="0.42"/><rect x="14" y="57.24" width="2" height="1.5" fill="#d4d4d4" opacity="0.42"/><rect x="4" y="59.27" width="2" height="1.5" fill="#808080" opacity="0.42"/><rect x="6" y="59.27" width="5" height="1.5" fill="#569cd6" opacity="0.42"/><rect x="11" y="59.27" width="1" height="1.5" fill="#808080" opacity="0.42"/><rect x="0" y="61.30" width="2" height="1.5" fill="#808080" opacity="0.42"/><rect x="2" y="61.30" width="4" height="1.5" fill="#569cd6" opacity="0.42"/><rect x="6" y="61.30" width="1" height="1.5" fill="#808080" opacity="0.42"/><rect x="0" y="63.33" width="2" height="1.5" fill="#808080" opacity="0.42"/><rect x="2" y="63.33" width="4" height="1.5" fill="#569cd6" opacity="0.42"/><rect x="6" y="63.33" width="1" height="1.5" fill="#808080" opacity="0.42"/></svg>
<div class="abs" style="left:1021px;top:108.8px;width:1px;height:766px;background:#363636"></div>
<div class="abs" style="left:1021px;top:108.8px;width:18px;height:389px;background:#424242"></div>
<div class="abs" style="left:1022px;top:483px;width:17px;height:2px;background:#8a8a8a"></div>
<div class="abs" style="left:1027px;top:485px;width:7px;height:11px;background:#959595"></div>
<div class="abs" style="left:1039px;top:38px;width:1px;height:837px;background:#444444"></div>
<div class="abs" style="left:1040px;top:38px;width:880px;height:43px;background:#252526"></div>
<div class="abs" style="left:1040px;top:38px;width:156px;height:43px;background:#1e1e1e"></div>
<svg class="abs" style="left:1056.3px;top:54.3px;" width="14.0" height="10.0" viewBox="0 0 14 10"><path d="M5.2 1 L1.3 5 L5.2 9 M8.8 1 L12.7 5 L8.8 9" fill="none" stroke="#cbcb41" stroke-width="2"/></svg>
<span class="t" style="left:1079.20px;top:51.00px;font-size:16px;line-height:20px;color:#9a9a9a;letter-spacing:-0.020px;">additem.ejs</span>
<svg class="abs" style="left:1168.6px;top:49.3px;" width="20" height="20" viewBox="0 0 20 20"><path d="M4.6 4.6 L15.4 15.4 M15.4 4.6 L4.6 15.4" fill="none" stroke="#8a8a8a" stroke-width="1.3"/></svg>
<svg class="abs" style="left:1876.2px;top:54.2px;" width="30" height="10" viewBox="0 0 30 10"><circle cx="8.7" cy="5" r="1.25" fill="#c5c5c5"/><circle cx="15.0" cy="5" r="1.25" fill="#c5c5c5"/><circle cx="21.3" cy="5" r="1.25" fill="#c5c5c5"/></svg>
<span class="t" style="left:1058.70px;top:86.00px;font-size:16px;line-height:20px;color:#a9a9a9;letter-spacing:-0.242px;">views</span>
<svg class="abs" style="left:1097.8px;top:85.5px;" width="20" height="20" viewBox="0 0 20 20"><path d="M8.25 4.5 L12.75 10 L8.25 15.5" fill="none" stroke="#a9a9a9" stroke-width="1.3"/></svg>
<svg class="abs" style="left:1122.5px;top:87.8px;" width="14.0" height="10.0" viewBox="0 0 14 10"><path d="M5.2 1 L1.3 5 L5.2 9 M8.8 1 L12.7 5 L8.8 9" fill="none" stroke="#cbcb41" stroke-width="2"/></svg>
<span class="t" style="left:1145.00px;top:86.00px;font-size:16px;line-height:20px;color:#a9a9a9;letter-spacing:0.062px;">additem.ejs</span>
<svg class="abs" style="left:1227.5px;top:85.5px;" width="20" height="20" viewBox="0 0 20 20"><path d="M8.25 4.5 L12.75 10 L8.25 15.5" fill="none" stroke="#a9a9a9" stroke-width="1.3"/></svg>
<svg class="abs" style="left:1248px;top:86px;" width="18" height="16" viewBox="0 0 18 16"><path d="M1 5.2 L9.8 1 L17 4.2 L17 10.6 L8 15 L1 11.6 Z M1 5.2 L8 8.6 L17 4.2 M8 8.6 L8 15" fill="none" stroke="#75beff" stroke-width="1.35" stroke-linejoin="round"/></svg>
<span class="t" style="left:1271.70px;top:86.00px;font-size:16px;line-height:20px;color:#a9a9a9;letter-spacing:0.343px;">html</span>
<svg class="abs" style="left:1304px;top:85.5px;" width="20" height="20" viewBox="0 0 20 20"><path d="M8.25 4.5 L12.75 10 L8.25 15.5" fill="none" stroke="#a9a9a9" stroke-width="1.3"/></svg>
<svg class="abs" style="left:1324.7px;top:86px;" width="18" height="16" viewBox="0 0 18 16"><path d="M1 5.2 L9.8 1 L17 4.2 L17 10.6 L8 15 L1 11.6 Z M1 5.2 L8 8.6 L17 4.2 M8 8.6 L8 15" fill="none" stroke="#75beff" stroke-width="1.35" stroke-linejoin="round"/></svg>
<span class="t" style="left:1348.60px;top:86.00px;font-size:16px;line-height:20px;color:#a9a9a9;letter-spacing:0.076px;">body</span>
<svg class="abs" style="left:1384px;top:85.5px;" width="20" height="20" viewBox="0 0 20 20"><path d="M8.25 4.5 L12.75 10 L8.25 15.5" fill="none" stroke="#a9a9a9" stroke-width="1.3"/></svg>
<svg class="abs" style="left:1404.7px;top:86px;" width="18" height="16" viewBox="0 0 18 16"><path d="M1 5.2 L9.8 1 L17 4.2 L17 10.6 L8 15 L1 11.6 Z M1 5.2 L8 8.6 L17 4.2 M8 8.6 L8 15" fill="none" stroke="#75beff" stroke-width="1.35" stroke-linejoin="round"/></svg>
<span class="t" style="left:1428.60px;top:86.00px;font-size:16px;line-height:20px;color:#a9a9a9;letter-spacing:-2.998px;">?</span>
<svg class="abs" style="left:1435px;top:85.5px;" width="20" height="20" viewBox="0 0 20 20"><path d="M8.25 4.5 L12.75 10 L8.25 15.5" fill="none" stroke="#a9a9a9" stroke-width="1.3"/></svg>
<svg class="abs" style="left:1456px;top:86px;" width="18" height="16" viewBox="0 0 18 16"><path d="M1 5.2 L9.8 1 L17 4.2 L17 10.6 L8 15 L1 11.6 Z M1 5.2 L8 8.6 L17 4.2 M8 8.6 L8 15" fill="none" stroke="#75beff" stroke-width="1.35" stroke-linejoin="round"/></svg>
<span class="t" style="left:1479.40px;top:86.00px;font-size:16px;line-height:20px;color:#a9a9a9;letter-spacing:-2.798px;">?</span>
<svg class="abs" style="left:1486.2px;top:85.5px;" width="20" height="20" viewBox="0 0 20 20"><path d="M8.25 4.5 L12.75 10 L8.25 15.5" fill="none" stroke="#a9a9a9" stroke-width="1.3"/></svg>
<svg class="abs" style="left:1506.8px;top:86px;" width="18" height="16" viewBox="0 0 18 16"><path d="M1 5.2 L9.8 1 L17 4.2 L17 10.6 L8 15 L1 11.6 Z M1 5.2 L8 8.6 L17 4.2 M8 8.6 L8 15" fill="none" stroke="#75beff" stroke-width="1.35" stroke-linejoin="round"/></svg>
<span class="t" style="left:1530.80px;top:86.00px;font-size:16px;line-height:20px;color:#a9a9a9;letter-spacing:0.100px;">form</span>
<svg class="abs" style="left:1564px;top:85.5px;" width="20" height="20" viewBox="0 0 20 20"><path d="M8.25 4.5 L12.75 10 L8.25 15.5" fill="none" stroke="#a9a9a9" stroke-width="1.3"/></svg>
<svg class="abs" style="left:1585px;top:86px;" width="18" height="16" viewBox="0 0 18 16"><path d="M1 5.2 L9.8 1 L17 4.2 L17 10.6 L8 15 L1 11.6 Z M1 5.2 L8 8.6 L17 4.2 M8 8.6 L8 15" fill="none" stroke="#75beff" stroke-width="1.35" stroke-linejoin="round"/></svg>
<span class="t" style="left:1608.50px;top:86.00px;font-size:16px;line-height:20px;color:#a9a9a9;letter-spacing:-0.051px;">div</span>
<svg class="abs" style="left:1629.7px;top:85.5px;" width="20" height="20" viewBox="0 0 20 20"><path d="M8.25 4.5 L12.75 10 L8.25 15.5" fill="none" stroke="#a9a9a9" stroke-width="1.3"/></svg>
<svg class="abs" style="left:1650.2px;top:86px;" width="18" height="16" viewBox="0 0 18 16"><path d="M1 5.2 L9.8 1 L17 4.2 L17 10.6 L8 15 L1 11.6 Z M1 5.2 L8 8.6 L17 4.2 M8 8.6 L8 15" fill="none" stroke="#75beff" stroke-width="1.35" stroke-linejoin="round"/></svg>
<span class="t" style="left:1674.00px;top:86.00px;font-size:16px;line-height:20px;color:#a9a9a9;letter-spacing:-0.181px;">label</span>
<div class="ed" style="left:1040px;top:109.25px;width:880px;height:765.25px">
<div class="abs" style="left:85px;top:546.25px;width:695px;height:23.75px;border-top:2px solid #282828;border-bottom:2px solid #282828"></div>
<div class="abs" style="left:84.30px;top:71.25px;width:1px;height:118.75px;background:#404040"></div><div class="abs" style="left:84.30px;top:237.50px;width:1px;height:570.00px;background:#404040"></div><div class="abs" style="left:122.78px;top:332.50px;width:1px;height:475.00px;background:#404040"></div><div class="abs" style="left:161.26px;top:356.25px;width:1px;height:47.50px;background:#404040"></div><div class="abs" style="left:161.26px;top:451.25px;width:1px;height:47.50px;background:#404040"></div><div class="abs" style="left:161.26px;top:546.25px;width:1px;height:47.50px;background:#707070"></div><div class="abs" style="left:161.26px;top:641.25px;width:1px;height:47.50px;background:#404040"></div><div class="abs" style="left:161.26px;top:736.25px;width:1px;height:47.50px;background:#404040"></div>
<div class="ln" style="top:1.75px;right:828.5999999999999px;color:#858585">1</div><div class="cl" style="top:1.75px;left:84.20px"><span style="color:#808080">&lt;!</span><span style="color:#569cd6">DOCTYPE</span><span style="color:#9cdcfe"> html</span><span style="color:#808080">&gt;</span></div><div class="ln" style="top:25.50px;right:828.5999999999999px;color:#858585">2</div><div class="cl" style="top:25.50px;left:84.20px"><span style="color:#808080">&lt;</span><span style="color:#569cd6">html</span><span style="color:#d4d4d4"> </span><span style="color:#9cdcfe">lang</span><span style="color:#d4d4d4">=</span><span style="color:#ce9178">&quot;en&quot;</span><span style="color:#808080">&gt;</span></div><div class="ln" style="top:49.25px;right:828.5999999999999px;color:#858585">3</div><div class="cl" style="top:49.25px;left:84.20px"><span style="color:#808080">&lt;</span><span style="color:#569cd6">head</span><span style="color:#808080">&gt;</span></div><div class="ln" style="top:73.00px;right:828.5999999999999px;color:#858585">4</div><div class="cl" style="top:73.00px;left:84.20px"><span style="color:#d4d4d4">    </span><span style="color:#808080">&lt;</span><span style="color:#569cd6">meta</span><span style="color:#d4d4d4"> </span><span style="color:#9cdcfe">charset</span><span style="color:#d4d4d4">=</span><span style="color:#ce9178">&quot;UTF-8&quot;</span><span style="color:#808080">&gt;</span></div><div class="ln" style="top:96.75px;right:828.5999999999999px;color:#858585">5</div><div class="cl" style="top:96.75px;left:84.20px"><span style="color:#d4d4d4">    </span><span style="color:#808080">&lt;</span><span style="color:#569cd6">meta</span><span style="color:#d4d4d4"> </span><span style="color:#9cdcfe">http-equiv</span><span style="color:#d4d4d4">=</span><span style="color:#ce9178">&quot;X-UA-Compatible&quot;</span><span style="color:#d4d4d4"> </span><span style="color:#9cdcfe">content</span><span style="color:#d4d4d4">=</span><span style="color:#ce9178">&quot;IE=edge&quot;</span><span style="color:#808080">&gt;</span></div><div class="ln" style="top:120.50px;right:828.5999999999999px;color:#858585">6</div><div class="cl" style="top:120.50px;left:84.20px"><span style="color:#d4d4d4">    </span><span style="color:#808080">&lt;</span><span style="color:#569cd6">meta</span><span style="color:#d4d4d4"> </span><span style="color:#9cdcfe">name</span><span style="color:#d4d4d4">=</span><span style="color:#ce9178">&quot;viewport&quot;</span><span style="color:#d4d4d4"> </span><span style="color:#9cdcfe">content</span><span style="color:#d4d4d4">=</span><span style="color:#ce9178">&quot;width=device-width, initial-scale=1.</span></div><div class="cl" style="top:144.25px;left:122.68px"><span style="color:#ce9178">0&quot;</span><span style="color:#808080">&gt;</span></div><div class="ln" style="top:168.00px;right:828.5999999999999px;color:#858585">7</div><div class="cl" style="top:168.00px;left:84.20px"><span style="color:#d4d4d4">    </span><span style="color:#808080">&lt;</span><span style="color:#569cd6">title</span><span style="color:#808080">&gt;</span><span class="th" style="color:#d4d4d4">โรงเบียร์ไทยแลนด์</span><span style="color:#d4d4d4"> POST Add Item</span><span style="color:#808080">&lt;/</span><span style="color:#569cd6">title</span><span style="color:#808080">&gt;</span></div><div class="ln" style="top:191.75px;right:828.5999999999999px;color:#858585">8</div><div class="cl" style="top:191.75px;left:84.20px"><span style="color:#808080">&lt;/</span><span style="color:#569cd6">head</span><span style="color:#808080">&gt;</span></div><div class="ln" style="top:215.50px;right:828.5999999999999px;color:#858585">9</div><div class="cl" style="top:215.50px;left:84.20px"><span style="color:#808080">&lt;</span><span style="color:#569cd6">body</span><span style="color:#808080">&gt;</span></div><div class="ln" style="top:239.25px;right:828.5999999999999px;color:#858585">10</div><div class="cl" style="top:239.25px;left:84.20px"><span style="color:#d4d4d4">    </span><span style="color:#f44747">&lt;</span><span style="color:#d4d4d4">% if</span><span style="color:#ffd700">(</span><span style="color:#d4d4d4">typeof Error != &quot;undefined&quot;</span><span style="color:#ffd700">)</span><span style="color:#d4d4d4"> </span><span style="color:#ffd700">{</span><span style="color:#d4d4d4"> %&gt;</span></div><div class="ln" style="top:263.00px;right:828.5999999999999px;color:#858585">11</div><div class="cl" style="top:263.00px;left:84.20px"><span style="color:#d4d4d4">    </span><span style="color:#808080">&lt;</span><span style="color:#569cd6">h1</span><span style="color:#808080">&gt;</span><span style="color:#f44747">&lt;</span><span style="color:#d4d4d4">%= mesg %&gt;</span><span style="color:#808080">&lt;/</span><span style="color:#569cd6">h1</span><span style="color:#808080">&gt;</span></div><div class="ln" style="top:286.75px;right:828.5999999999999px;color:#858585">12</div><div class="cl" style="top:286.75px;left:84.20px"><span style="color:#d4d4d4">    </span><span style="color:#f44747">&lt;</span><span style="color:#d4d4d4">% </span><span style="color:#ffd700">}</span><span style="color:#d4d4d4"> %&gt;</span></div><div class="ln" style="top:310.50px;right:828.5999999999999px;color:#858585">13</div><div class="cl" style="top:310.50px;left:84.20px"><span style="color:#d4d4d4">    </span><span style="color:#808080">&lt;</span><span style="color:#569cd6">form</span><span style="color:#d4d4d4"> </span><span style="color:#9cdcfe">action</span><span style="color:#d4d4d4">=</span><span style="color:#ce9178">&quot;/additem&quot;</span><span style="color:#d4d4d4"> </span><span style="color:#9cdcfe">method</span><span style="color:#d4d4d4">=</span><span style="color:#ce9178">&quot;post&quot;</span><span style="color:#808080">&gt;</span></div><div class="ln" style="top:334.25px;right:828.5999999999999px;color:#858585">14</div><div class="cl" style="top:334.25px;left:84.20px"><span style="color:#d4d4d4">        </span><span style="color:#808080">&lt;</span><span style="color:#569cd6">div</span><span style="color:#808080">&gt;</span></div><div class="ln" style="top:358.00px;right:828.5999999999999px;color:#858585">15</div><div class="cl" style="top:358.00px;left:84.20px"><span style="color:#d4d4d4">            </span><span style="color:#808080">&lt;</span><span style="color:#569cd6">label</span><span style="color:#808080">&gt;</span><span style="color:#d4d4d4">id</span><span style="color:#808080">&lt;/</span><span style="color:#569cd6">label</span><span style="color:#808080">&gt;</span></div><div class="ln" style="top:381.75px;right:828.5999999999999px;color:#858585">16</div><div class="cl" style="top:381.75px;left:84.20px"><span style="color:#d4d4d4">            </span><span style="color:#808080">&lt;</span><span style="color:#569cd6">input</span><span style="color:#d4d4d4"> </span><span style="color:#9cdcfe">type</span><span style="color:#d4d4d4">=</span><span style="color:#ce9178">&quot;text&quot;</span><span style="color:#d4d4d4"> </span><span style="color:#9cdcfe">name</span><span style="color:#d4d4d4">=</span><span style="color:#ce9178">&quot;id&quot;</span><span style="color:#d4d4d4"> </span><span style="color:#9cdcfe">id</span><span style="color:#d4d4d4">=</span><span style="color:#ce9178">&quot;id&quot;</span><span style="color:#808080">&gt;</span></div><div class="ln" style="top:405.50px;right:828.5999999999999px;color:#858585">17</div><div class="cl" style="top:405.50px;left:84.20px"><span style="color:#d4d4d4">        </span><span style="color:#808080">&lt;/</span><span style="color:#569cd6">div</span><span style="color:#808080">&gt;</span></div><div class="ln" style="top:429.25px;right:828.5999999999999px;color:#858585">18</div><div class="cl" style="top:429.25px;left:84.20px"><span style="color:#d4d4d4">        </span><span style="color:#808080">&lt;</span><span style="color:#569cd6">div</span><span style="color:#808080">&gt;</span></div><div class="ln" style="top:453.00px;right:828.5999999999999px;color:#858585">19</div><div class="cl" style="top:453.00px;left:84.20px"><span style="color:#d4d4d4">            </span><span style="color:#808080">&lt;</span><span style="color:#569cd6">label</span><span style="color:#808080">&gt;</span><span style="color:#d4d4d4">name</span><span style="color:#808080">&lt;/</span><span style="color:#569cd6">label</span><span style="color:#808080">&gt;</span></div><div class="ln" style="top:476.75px;right:828.5999999999999px;color:#858585">20</div><div class="cl" style="top:476.75px;left:84.20px"><span style="color:#d4d4d4">            </span><span style="color:#808080">&lt;</span><span style="color:#569cd6">input</span><span style="color:#d4d4d4"> </span><span style="color:#9cdcfe">type</span><span style="color:#d4d4d4">=</span><span style="color:#ce9178">&quot;text&quot;</span><span style="color:#d4d4d4"> </span><span style="color:#9cdcfe">name</span><span style="color:#d4d4d4">=</span><span style="color:#ce9178">&quot;name&quot;</span><span style="color:#d4d4d4"> </span><span style="color:#9cdcfe">id</span><span style="color:#d4d4d4">=</span><span style="color:#ce9178">&quot;name&quot;</span><span style="color:#808080">&gt;</span></div><div class="ln" style="top:500.50px;right:828.5999999999999px;color:#858585">21</div><div class="cl" style="top:500.50px;left:84.20px"><span style="color:#d4d4d4">        </span><span style="color:#808080">&lt;/</span><span style="color:#569cd6">div</span><span style="color:#808080">&gt;</span></div><div class="ln" style="top:524.25px;right:828.5999999999999px;color:#858585">22</div><div class="cl" style="top:524.25px;left:84.20px"><span style="color:#d4d4d4">        </span><span style="color:#808080">&lt;</span><span style="color:#569cd6">div</span><span style="color:#808080">&gt;</span></div><div class="ln" style="top:548.00px;right:828.5999999999999px;color:#c6c6c6">23</div><div class="cl" style="top:548.00px;left:84.20px"><span style="color:#d4d4d4">            </span><span style="color:#808080">&lt;</span><span style="color:#569cd6">label</span><span style="color:#808080">&gt;</span><span style="color:#d4d4d4">tagline</span><span style="color:#808080">&lt;/</span><span style="color:#569cd6">label</span><span style="color:#808080">&gt;</span></div><div class="ln" style="top:571.75px;right:828.5999999999999px;color:#858585">24</div><div class="cl" style="top:571.75px;left:84.20px"><span style="color:#d4d4d4">            </span><span style="color:#808080">&lt;</span><span style="color:#569cd6">input</span><span style="color:#d4d4d4"> </span><span style="color:#9cdcfe">type</span><span style="color:#d4d4d4">=</span><span style="color:#ce9178">&quot;text&quot;</span><span style="color:#d4d4d4"> </span><span style="color:#9cdcfe">name</span><span style="color:#d4d4d4">=</span><span style="color:#ce9178">&quot;tagline&quot;</span><span style="color:#d4d4d4"> </span><span style="color:#9cdcfe">id</span><span style="color:#d4d4d4">=</span><span style="color:#ce9178">&quot;tagline&quot;</span><span style="color:#808080">&gt;</span></div><div class="ln" style="top:595.50px;right:828.5999999999999px;color:#858585">25</div><div class="cl" style="top:595.50px;left:84.20px"><span style="color:#d4d4d4">        </span><span style="color:#808080">&lt;/</span><span style="color:#569cd6">div</span><span style="color:#808080">&gt;</span></div><div class="ln" style="top:619.25px;right:828.5999999999999px;color:#858585">26</div><div class="cl" style="top:619.25px;left:84.20px"><span style="color:#d4d4d4">        </span><span style="color:#808080">&lt;</span><span style="color:#569cd6">div</span><span style="color:#808080">&gt;</span></div><div class="ln" style="top:643.00px;right:828.5999999999999px;color:#858585">27</div><div class="cl" style="top:643.00px;left:84.20px"><span style="color:#d4d4d4">            </span><span style="color:#808080">&lt;</span><span style="color:#569cd6">label</span><span style="color:#808080">&gt;</span><span style="color:#d4d4d4">description</span><span style="color:#808080">&lt;/</span><span style="color:#569cd6">label</span><span style="color:#808080">&gt;</span></div><div class="ln" style="top:666.75px;right:828.5999999999999px;color:#858585">28</div><div class="cl" style="top:666.75px;left:84.20px"><span style="color:#d4d4d4">            </span><span style="color:#808080">&lt;</span><span style="color:#569cd6">input</span><span style="color:#d4d4d4"> </span><span style="color:#9cdcfe">type</span><span style="color:#d4d4d4">=</span><span style="color:#ce9178">&quot;text&quot;</span><span style="color:#d4d4d4"> </span><span style="color:#9cdcfe">name</span><span style="color:#d4d4d4">=</span><span style="color:#ce9178">&quot;description&quot;</span><span style="color:#d4d4d4"> </span><span style="color:#9cdcfe">id</span><span style="color:#d4d4d4">=</span><span style="color:#ce9178">&quot;description&quot;</span><span style="color:#808080">&gt;</span></div><div class="ln" style="top:690.50px;right:828.5999999999999px;color:#858585">29</div><div class="cl" style="top:690.50px;left:84.20px"><span style="color:#d4d4d4">        </span><span style="color:#808080">&lt;/</span><span style="color:#569cd6">div</span><span style="color:#808080">&gt;</span></div><div class="ln" style="top:714.25px;right:828.5999999999999px;color:#858585">30</div><div class="cl" style="top:714.25px;left:84.20px"><span style="color:#d4d4d4">        </span><span style="color:#808080">&lt;</span><span style="color:#569cd6">div</span><span style="color:#808080">&gt;</span></div><div class="ln" style="top:738.00px;right:828.5999999999999px;color:#858585">31</div><div class="cl" style="top:738.00px;left:84.20px"><span style="color:#d4d4d4">            </span><span style="color:#808080">&lt;</span><span style="color:#569cd6">label</span><span style="color:#808080">&gt;</span><span style="color:#d4d4d4">image</span><span style="color:#808080">&lt;/</span><span style="color:#569cd6">label</span><span style="color:#808080">&gt;</span></div><div class="ln" style="top:761.75px;right:828.5999999999999px;color:#858585">32</div><div class="cl" style="top:759.25px;left:84.20px"><span style="color:#d4d4d4">            </span><span style="color:#808080">&lt;</span><span style="color:#569cd6">input</span><span style="color:#d4d4d4"> </span><span style="color:#9cdcfe">type</span><span style="color:#d4d4d4">=</span><span style="color:#ce9178">&quot;text&quot;</span><span style="color:#d4d4d4"> </span><span style="color:#9cdcfe">name</span><span style="color:#d4d4d4">=</span><span style="color:#ce9178">&quot;image&quot;</span><span style="color:#d4d4d4"> </span><span style="color:#9cdcfe">id</span><span style="color:#d4d4d4">=</span><span style="color:#ce9178">&quot;image&quot;</span><span style="color:#808080">&gt;</span></div>
</div>
<svg class="abs" style="left:1828.5px;top:108.2px" width="74" height="90" viewBox="0 0 74 90"><rect x="0" y="46.69" width="74" height="2" fill="#264f78" opacity="0.75"/><rect x="0" y="0.40" width="2" height="1.5" fill="#808080" opacity="0.42"/><rect x="2" y="0.40" width="7" height="1.5" fill="#569cd6" opacity="0.42"/><rect x="10" y="0.40" width="4" height="1.5" fill="#9cdcfe" opacity="0.42"/><rect x="14" y="0.40" width="1" height="1.5" fill="#808080" opacity="0.42"/><rect x="0" y="2.43" width="1" height="1.5" fill="#808080" opacity="0.42"/><rect x="1" y="2.43" width="4" height="1.5" fill="#569cd6" opacity="0.42"/><rect x="6" y="2.43" width="4" height="1.5" fill="#9cdcfe" opacity="0.42"/><rect x="10" y="2.43" width="1" height="1.5" fill="#d4d4d4" opacity="0.42"/><rect x="11" y="2.43" width="4" height="1.5" fill="#ce9178" opacity="0.42"/><rect x="15" y="2.43" width="1" height="1.5" fill="#808080" opacity="0.42"/><rect x="0" y="4.46" width="1" height="1.5" fill="#808080" opacity="0.42"/><rect x="1" y="4.46" width="4" height="1.5" fill="#569cd6" opacity="0.42"/><rect x="5" y="4.46" width="1" height="1.5" fill="#808080" opacity="0.42"/><rect x="4" y="6.49" width="1" height="1.5" fill="#808080" opacity="0.42"/><rect x="5" y="6.49" width="4" height="1.5" fill="#569cd6" opacity="0.42"/><rect x="10" y="6.49" width="7" height="1.5" fill="#9cdcfe" opacity="0.42"/><rect x="17" y="6.49" width="1" height="1.5" fill="#d4d4d4" opacity="0.42"/><rect x="18" y="6.49" width="7" height="1.5" fill="#ce9178" opacity="0.42"/><rect x="25" y="6.49" width="1" height="1.5" fill="#808080" opacity="0.42"/><rect x="4" y="8.52" width="1" height="1.5" fill="#808080" opacity="0.42"/><rect x="5" y="8.52" width="4" height="1.5" fill="#569cd6" opacity="0.42"/><rect x="10" y="8.52" width="10" height="1.5" fill="#9cdcfe" opacity="0.42"/><rect x="20" y="8.52" width="1" height="1.5" fill="#d4d4d4" opacity="0.42"/><rect x="21" y="8.52" width="17" height="1.5" fill="#ce9178" opacity="0.42"/><rect x="39" y="8.52" width="7" height="1.5" fill="#9cdcfe" opacity="0.42"/><rect x="46" y="8.52" width="1" height="1.5" fill="#d4d4d4" opacity="0.42"/><rect x="47" y="8.52" width="9" height="1.5" fill="#ce9178" opacity="0.42"/><rect x="56" y="8.52" width="1" height="1.5" fill="#808080" opacity="0.42"/><rect x="4" y="10.55" width="1" height="1.5" fill="#808080" opacity="0.42"/><rect x="5" y="10.55" width="4" height="1.5" fill="#569cd6" opacity="0.42"/><rect x="10" y="10.55" width="4" height="1.5" fill="#9cdcfe" opacity="0.42"/><rect x="14" y="10.55" width="1" height="1.5" fill="#d4d4d4" opacity="0.42"/><rect x="15" y="10.55" width="10" height="1.5" fill="#ce9178" opacity="0.42"/><rect x="26" y="10.55" width="7" height="1.5" fill="#9cdcfe" opacity="0.42"/><rect x="33" y="10.55" width="1" height="1.5" fill="#d4d4d4" opacity="0.42"/><rect x="34" y="10.55" width="20" height="1.5" fill="#ce9178" opacity="0.42"/><rect x="55" y="10.55" width="16" height="1.5" fill="#ce9178" opacity="0.42"/><rect x="4" y="12.58" width="2" height="1.5" fill="#ce9178" opacity="0.42"/><rect x="6" y="12.58" width="1" height="1.5" fill="#808080" opacity="0.42"/><rect x="4" y="14.61" width="1" height="1.5" fill="#808080" opacity="0.42"/><rect x="5" y="14.61" width="5" height="1.5" fill="#569cd6" opacity="0.42"/><rect x="10" y="14.61" width="1" height="1.5" fill="#808080" opacity="0.42"/><rect x="11" y="14.61" width="14" height="1.5" fill="#d4d4d4" opacity="0.42"/><rect x="29" y="14.61" width="4" height="1.5" fill="#d4d4d4" opacity="0.42"/><rect x="34" y="14.61" width="3" height="1.5" fill="#d4d4d4" opacity="0.42"/><rect x="38" y="14.61" width="4" height="1.5" fill="#d4d4d4" opacity="0.42"/><rect x="39" y="14.61" width="2" height="1.5" fill="#808080" opacity="0.42"/><rect x="41" y="14.61" width="5" height="1.5" fill="#569cd6" opacity="0.42"/><rect x="46" y="14.61" width="1" height="1.5" fill="#808080" opacity="0.42"/><rect x="0" y="16.64" width="2" height="1.5" fill="#808080" opacity="0.42"/><rect x="2" y="16.64" width="4" height="1.5" fill="#569cd6" opacity="0.42"/><rect x="6" y="16.64" width="1" height="1.5" fill="#808080" opacity="0.42"/><rect x="0" y="18.67" width="1" height="1.5" fill="#808080" opacity="0.42"/><rect x="1" y="18.67" width="4" height="1.5" fill="#569cd6" opacity="0.42"/><rect x="5" y="18.67" width="1" height="1.5" fill="#808080" opacity="0.42"/><rect x="4" y="20.70" width="1" height="1.5" fill="#f44747" opacity="0.42"/><rect x="5" y="20.70" width="1" height="1.5" fill="#d4d4d4" opacity="0.42"/><rect x="7" y="20.70" width="2" height="1.5" fill="#d4d4d4" opacity="0.42"/><rect x="9" y="20.70" width="1" height="1.5" fill="#ffd700" opacity="0.42"/><rect x="10" y="20.70" width="6" height="1.5" fill="#d4d4d4" opacity="0.42"/><rect x="17" y="20.70" width="5" height="1.5" fill="#d4d4d4" opacity="0.42"/><rect x="23" y="20.70" width="2" height="1.5" fill="#d4d4d4" opacity="0.42"/><rect x="26" y="20.70" width="11" height="1.5" fill="#d4d4d4" opacity="0.42"/><rect x="37" y="20.70" width="1" height="1.5" fill="#ffd700" opacity="0.42"/><rect x="39" y="20.70" width="1" height="1.5" fill="#ffd700" opacity="0.42"/><rect x="41" y="20.70" width="2" height="1.5" fill="#d4d4d4" opacity="0.42"/><rect x="4" y="22.73" width="1" height="1.5" fill="#808080" opacity="0.42"/><rect x="5" y="22.73" width="2" height="1.5" fill="#569cd6" opacity="0.42"/><rect x="7" y="22.73" width="1" height="1.5" fill="#808080" opacity="0.42"/><rect x="8" y="22.73" width="1" height="1.5" fill="#f44747" opacity="0.42"/><rect x="9" y="22.73" width="2" height="1.5" fill="#d4d4d4" opacity="0.42"/><rect x="12" y="22.73" width="4" height="1.5" fill="#d4d4d4" opacity="0.42"/><rect x="17" y="22.73" width="2" height="1.5" fill="#d4d4d4" opacity="0.42"/><rect x="19" y="22.73" width="2" height="1.5" fill="#808080" opacity="0.42"/><rect x="21" y="22.73" width="2" height="1.5" fill="#569cd6" opacity="0.42"/><rect x="23" y="22.73" width="1" height="1.5" fill="#808080" opacity="0.42"/><rect x="4" y="24.76" width="1" height="1.5" fill="#f44747" opacity="0.42"/><rect x="5" y="24.76" width="1" height="1.5" fill="#d4d4d4" opacity="0.42"/><rect x="7" y="24.76" width="1" height="1.5" fill="#ffd700" opacity="0.42"/><rect x="9" y="24.76" width="2" height="1.5" fill="#d4d4d4" opacity="0.42"/><rect x="4" y="26.79" width="1" height="1.5" fill="#808080" opacity="0.42"/><rect x="5" y="26.79" width="4" height="1.5" fill="#569cd6" opacity="0.42"/><rect x="10" y="26.79" width="6" height="1.5" fill="#9cdcfe" opacity="0.42"/><rect x="16" y="26.79" width="1" height="1.5" fill="#d4d4d4" opacity="0.42"/><rect x="17" y="26.79" width="10" height="1.5" fill="#ce9178" opacity="0.42"/><rect x="28" y="26.79" width="6" height="1.5" fill="#9cdcfe" opacity="0.42"/><rect x="34" y="26.79" width="1" height="1.5" fill="#d4d4d4" opacity="0.42"/><rect x="35" y="26.79" width="6" height="1.5" fill="#ce9178" opacity="0.42"/><rect x="41" y="26.79" width="1" height="1.5" fill="#808080" opacity="0.42"/><rect x="8" y="28.82" width="1" height="1.5" fill="#808080" opacity="0.42"/><rect x="9" y="28.82" width="3" height="1.5" fill="#569cd6" opacity="0.42"/><rect x="12" y="28.82" width="1" height="1.5" fill="#808080" opacity="0.42"/><rect x="12" y="30.85" width="1" height="1.5" fill="#808080" opacity="0.42"/><rect x="13" y="30.85" width="5" height="1.5" fill="#569cd6" opacity="0.42"/><rect x="18" y="30.85" width="1" height="1.5" fill="#808080" opacity="0.42"/><rect x="19" y="30.85" width="2" height="1.5" fill="#d4d4d4" opacity="0.42"/><rect x="21" y="30.85" width="2" height="1.5" fill="#808080" opacity="0.42"/><rect x="23" y="30.85" width="5" height="1.5" fill="#569cd6" opacity="0.42"/><rect x="28" y="30.85" width="1" height="1.5" fill="#808080" opacity="0.42"/><rect x="12" y="32.88" width="1" height="1.5" fill="#808080" opacity="0.42"/><rect x="13" y="32.88" width="5" height="1.5" fill="#569cd6" opacity="0.42"/><rect x="19" y="32.88" width="4" height="1.5" fill="#9cdcfe" opacity="0.42"/><rect x="23" y="32.88" width="1" height="1.5" fill="#d4d4d4" opacity="0.42"/><rect x="24" y="32.88" width="6" height="1.5" fill="#ce9178" opacity="0.42"/><rect x="31" y="32.88" width="4" height="1.5" fill="#9cdcfe" opacity="0.42"/><rect x="35" y="32.88" width="1" height="1.5" fill="#d4d4d4" opacity="0.42"/><rect x="36" y="32.88" width="4" height="1.5" fill="#ce9178" opacity="0.42"/><rect x="41" y="32.88" width="2" height="1.5" fill="#9cdcfe" opacity="0.42"/><rect x="43" y="32.88" width="1" height="1.5" fill="#d4d4d4" opacity="0.42"/><rect x="44" y="32.88" width="4" height="1.5" fill="#ce9178" opacity="0.42"/><rect x="48" y="32.88" width="1" height="1.5" fill="#808080" opacity="0.42"/><rect x="8" y="34.91" width="2" height="1.5" fill="#808080" opacity="0.42"/><rect x="10" y="34.91" width="3" height="1.5" fill="#569cd6" opacity="0.42"/><rect x="13" y="34.91" width="1" height="1.5" fill="#808080" opacity="0.42"/><rect x="8" y="36.94" width="1" height="1.5" fill="#808080" opacity="0.42"/><rect x="9" y="36.94" width="3" height="1.5" fill="#569cd6" opacity="0.42"/><rect x="12" y="36.94" width="1" height="1.5" fill="#808080" opacity="0.42"/><rect x="12" y="38.97" width="1" height="1.5" fill="#808080" opacity="0.42"/><rect x="13" y="38.97" width="5" height="1.5" fill="#569cd6" opacity="0.42"/><rect x="18" y="38.97" width="1" height="1.5" fill="#808080" opacity="0.42"/><rect x="19" y="38.97" width="4" height="1.5" fill="#d4d4d4" opacity="0.42"/><rect x="23" y="38.97" width="2" height="1.5" fill="#808080" opacity="0.42"/><rect x="25" y="38.97" width="5" height="1.5" fill="#569cd6" opacity="0.42"/><rect x="30" y="38.97" width="1" height="1.5" fill="#808080" opacity="0.42"/><rect x="12" y="41.00" width="1" height="1.5" fill="#808080" opacity="0.42"/><rect x="13" y="41.00" width="5" height="1.5" fill="#569cd6" opacity="0.42"/><rect x="19" y="41.00" width="4" height="1.5" fill="#9cdcfe" opacity="0.42"/><rect x="23" y="41.00" width="1" height="1.5" fill="#d4d4d4" opacity="0.42"/><rect x="24" y="41.00" width="6" height="1.5" fill="#ce9178" opacity="0.42"/><rect x="31" y="41.00" width="4" height="1.5" fill="#9cdcfe" opacity="0.42"/><rect x="35" y="41.00" width="1" height="1.5" fill="#d4d4d4" opacity="0.42"/><rect x="36" y="41.00" width="6" height="1.5" fill="#ce9178" opacity="0.42"/><rect x="43" y="41.00" width="2" height="1.5" fill="#9cdcfe" opacity="0.42"/><rect x="45" y="41.00" width="1" height="1.5" fill="#d4d4d4" opacity="0.42"/><rect x="46" y="41.00" width="6" height="1.5" fill="#ce9178" opacity="0.42"/><rect x="52" y="41.00" width="1" height="1.5" fill="#808080" opacity="0.42"/><rect x="8" y="43.03" width="2" height="1.5" fill="#808080" opacity="0.42"/><rect x="10" y="43.03" width="3" height="1.5" fill="#569cd6" opacity="0.42"/><rect x="13" y="43.03" width="1" height="1.5" fill="#808080" opacity="0.42"/><rect x="8" y="45.06" width="1" height="1.5" fill="#808080" opacity="0.42"/><rect x="9" y="45.06" width="3" height="1.5" fill="#569cd6" opacity="0.42"/><rect x="12" y="45.06" width="1" height="1.5" fill="#808080" opacity="0.42"/><rect x="12" y="47.09" width="1" height="1.5" fill="#808080" opacity="0.42"/><rect x="13" y="47.09" width="5" height="1.5" fill="#569cd6" opacity="0.42"/><rect x="18" y="47.09" width="1" height="1.5" fill="#808080" opacity="0.42"/><rect x="19" y="47.09" width="7" height="1.5" fill="#d4d4d4" opacity="0.42"/><rect x="26" y="47.09" width="2" height="1.5" fill="#808080" opacity="0.42"/><rect x="28" y="47.09" width="5" height="1.5" fill="#569cd6" opacity="0.42"/><rect x="33" y="47.09" width="1" height="1.5" fill="#808080" opacity="0.42"/><rect x="12" y="49.12" width="1" height="1.5" fill="#808080" opacity="0.42"/><rect x="13" y="49.12" width="5" height="1.5" fill="#569cd6" opacity="0.42"/><rect x="19" y="49.12" width="4" height="1.5" fill="#9cdcfe" opacity="0.42"/><rect x="23" y="49.12" width="1" height="1.5" fill="#d4d4d4" opacity="0.42"/><rect x="24" y="49.12" width="6" height="1.5" fill="#ce9178" opacity="0.42"/><rect x="31" y="49.12" width="4" height="1.5" fill="#9cdcfe" opacity="0.42"/><rect x="35" y="49.12" width="1" height="1.5" fill="#d4d4d4" opacity="0.42"/><rect x="36" y="49.12" width="9" height="1.5" fill="#ce9178" opacity="0.42"/><rect x="46" y="49.12" width="2" height="1.5" fill="#9cdcfe" opacity="0.42"/><rect x="48" y="49.12" width="1" height="1.5" fill="#d4d4d4" opacity="0.42"/><rect x="49" y="49.12" width="9" height="1.5" fill="#ce9178" opacity="0.42"/><rect x="58" y="49.12" width="1" height="1.5" fill="#808080" opacity="0.42"/><rect x="8" y="51.15" width="2" height="1.5" fill="#808080" opacity="0.42"/><rect x="10" y="51.15" width="3" height="1.5" fill="#569cd6" opacity="0.42"/><rect x="13" y="51.15" width="1" height="1.5" fill="#808080" opacity="0.42"/><rect x="8" y="53.18" width="1" height="1.5" fill="#808080" opacity="0.42"/><rect x="9" y="53.18" width="3" height="1.5" fill="#569cd6" opacity="0.42"/><rect x="12" y="53.18" width="1" height="1.5" fill="#808080" opacity="0.42"/><rect x="12" y="55.21" width="1" height="1.5" fill="#808080" opacity="0.42"/><rect x="13" y="55.21" width="5" height="1.5" fill="#569cd6" opacity="0.42"/><rect x="18" y="55.21" width="1" height="1.5" fill="#808080" opacity="0.42"/><rect x="19" y="55.21" width="11" height="1.5" fill="#d4d4d4" opacity="0.42"/><rect x="30" y="55.21" width="2" height="1.5" fill="#808080" opacity="0.42"/><rect x="32" y="55.21" width="5" height="1.5" fill="#569cd6" opacity="0.42"/><rect x="37" y="55.21" width="1" height="1.5" fill="#808080" opacity="0.42"/><rect x="12" y="57.24" width="1" height="1.5" fill="#808080" opacity="0.42"/><rect x="13" y="57.24" width="5" height="1.5" fill="#569cd6" opacity="0.42"/><rect x="19" y="57.24" width="4" height="1.5" fill="#9cdcfe" opacity="0.42"/><rect x="23" y="57.24" width="1" height="1.5" fill="#d4d4d4" opacity="0.42"/><rect x="24" y="57.24" width="6" height="1.5" fill="#ce9178" opacity="0.42"/><rect x="31" y="57.24" width="4" height="1.5" fill="#9cdcfe" opacity="0.42"/><rect x="35" y="57.24" width="1" height="1.5" fill="#d4d4d4" opacity="0.42"/><rect x="36" y="57.24" width="13" height="1.5" fill="#ce9178" opacity="0.42"/><rect x="50" y="57.24" width="2" height="1.5" fill="#9cdcfe" opacity="0.42"/><rect x="52" y="57.24" width="1" height="1.5" fill="#d4d4d4" opacity="0.42"/><rect x="53" y="57.24" width="13" height="1.5" fill="#ce9178" opacity="0.42"/><rect x="66" y="57.24" width="1" height="1.5" fill="#808080" opacity="0.42"/><rect x="8" y="59.27" width="2" height="1.5" fill="#808080" opacity="0.42"/><rect x="10" y="59.27" width="3" height="1.5" fill="#569cd6" opacity="0.42"/><rect x="13" y="59.27" width="1" height="1.5" fill="#808080" opacity="0.42"/><rect x="8" y="61.30" width="1" height="1.5" fill="#808080" opacity="0.42"/><rect x="9" y="61.30" width="3" height="1.5" fill="#569cd6" opacity="0.42"/><rect x="12" y="61.30" width="1" height="1.5" fill="#808080" opacity="0.42"/><rect x="12" y="63.33" width="1" height="1.5" fill="#808080" opacity="0.42"/><rect x="13" y="63.33" width="5" height="1.5" fill="#569cd6" opacity="0.42"/><rect x="18" y="63.33" width="1" height="1.5" fill="#808080" opacity="0.42"/><rect x="19" y="63.33" width="5" height="1.5" fill="#d4d4d4" opacity="0.42"/><rect x="24" y="63.33" width="2" height="1.5" fill="#808080" opacity="0.42"/><rect x="26" y="63.33" width="5" height="1.5" fill="#569cd6" opacity="0.42"/><rect x="31" y="63.33" width="1" height="1.5" fill="#808080" opacity="0.42"/><rect x="12" y="65.36" width="1" height="1.5" fill="#808080" opacity="0.42"/><rect x="13" y="65.36" width="5" height="1.5" fill="#569cd6" opacity="0.42"/><rect x="19" y="65.36" width="4" height="1.5" fill="#9cdcfe" opacity="0.42"/><rect x="23" y="65.36" width="1" height="1.5" fill="#d4d4d4" opacity="0.42"/><rect x="24" y="65.36" width="6" height="1.5" fill="#ce9178" opacity="0.42"/><rect x="31" y="65.36" width="4" height="1.5" fill="#9cdcfe" opacity="0.42"/><rect x="35" y="65.36" width="1" height="1.5" fill="#d4d4d4" opacity="0.42"/><rect x="36" y="65.36" width="7" height="1.5" fill="#ce9178" opacity="0.42"/><rect x="44" y="65.36" width="2" height="1.5" fill="#9cdcfe" opacity="0.42"/><rect x="46" y="65.36" width="1" height="1.5" fill="#d4d4d4" opacity="0.42"/><rect x="47" y="65.36" width="7" height="1.5" fill="#ce9178" opacity="0.42"/><rect x="54" y="65.36" width="1" height="1.5" fill="#808080" opacity="0.42"/><rect x="8" y="67.39" width="2" height="1.5" fill="#808080" opacity="0.42"/><rect x="10" y="67.39" width="3" height="1.5" fill="#569cd6" opacity="0.42"/><rect x="13" y="67.39" width="1" height="1.5" fill="#808080" opacity="0.42"/><rect x="8" y="69.42" width="1" height="1.5" fill="#808080" opacity="0.42"/><rect x="9" y="69.42" width="5" height="1.5" fill="#569cd6" opacity="0.42"/><rect x="15" y="69.42" width="4" height="1.5" fill="#9cdcfe" opacity="0.42"/><rect x="19" y="69.42" width="1" height="1.5" fill="#d4d4d4" opacity="0.42"/><rect x="20" y="69.42" width="8" height="1.5" fill="#ce9178" opacity="0.42"/><rect x="29" y="69.42" width="5" height="1.5" fill="#9cdcfe" opacity="0.42"/><rect x="34" y="69.42" width="1" height="1.5" fill="#d4d4d4" opacity="0.42"/><rect x="35" y="69.42" width="8" height="1.5" fill="#ce9178" opacity="0.42"/><rect x="43" y="69.42" width="1" height="1.5" fill="#808080" opacity="0.42"/><rect x="4" y="71.45" width="2" height="1.5" fill="#808080" opacity="0.42"/><rect x="6" y="71.45" width="4" height="1.5" fill="#569cd6" opacity="0.42"/><rect x="10" y="71.45" width="1" height="1.5" fill="#808080" opacity="0.42"/><rect x="0" y="73.48" width="2" height="1.5" fill="#808080" opacity="0.42"/><rect x="2" y="73.48" width="4" height="1.5" fill="#569cd6" opacity="0.42"/><rect x="6" y="73.48" width="1" height="1.5" fill="#808080" opacity="0.42"/><rect x="0" y="75.51" width="2" height="1.5" fill="#808080" opacity="0.42"/><rect x="2" y="75.51" width="4" height="1.5" fill="#569cd6" opacity="0.42"/><rect x="6" y="75.51" width="1" height="1.5" fill="#808080" opacity="0.42"/></svg>
<div class="abs" style="left:1903px;top:108.8px;width:1px;height:766px;background:#3a3a3a"></div>
<div class="abs" style="left:1904px;top:362px;width:16px;height:2px;background:#a0a0a0"></div>
<div class="abs" style="left:273px;top:874px;width:1647px;height:128px;background:#1e1e1e;border-top:1px solid #454545"></div>
<span class="t" style="left:297.50px;top:888.00px;font-size:13.25px;line-height:20px;color:#969696;letter-spacing:-0.829px;">PROBLEMS</span>
<span class="t" style="left:395.00px;top:888.00px;font-size:13.25px;line-height:20px;color:#969696;letter-spacing:-0.611px;">OUTPUT</span>
<span class="t" style="left:476.30px;top:888.00px;font-size:13.25px;line-height:20px;color:#969696;letter-spacing:-0.723px;">DEBUG CONSOLE</span>
<span class="t" style="left:613.30px;top:888.00px;font-size:13.25px;line-height:20px;color:#e7e7e7;letter-spacing:-0.412px;">TERMINAL</span>
<div class="abs" style="left:611.3px;top:909.5px;width:69px;height:1.3px;background:#e7e7e7"></div>
<div class="tm" style="left:298.3px;top:921.81px"><span style="color:#cccccc">listen on port : ? </span><span style="color:#e5e510">5000</span></div>
<div class="tm" style="left:298.3px;top:941.71px"><span style="color:#cccccc">connected id : ? </span><span style="color:#e5e510">205</span></div>
<div class="tm" style="left:298.3px;top:961.61px"><span style="color:#cccccc">connected id : ? </span><span style="color:#e5e510">205</span></div>
<div class="abs" style="left:298.4px;top:980.4px;width:8.7px;height:19px;border:1.2px solid #cccccc"></div>
<svg class="abs" style="left:1643px;top:888px;" width="18" height="18" viewBox="0 0 18 18"><rect x="0.8" y="0.8" width="16.4" height="16.4" rx="1.8" fill="none" stroke="#c5c5c5" stroke-width="1.3"/><path d="M6.3 5 L10.6 9 L6.3 13" fill="none" stroke="#c5c5c5" stroke-width="1.4"/></svg>
<span class="t" style="left:1667.70px;top:888.00px;font-size:14.5px;line-height:20px;color:#cccccc;letter-spacing:-0.481px;">powershell</span>
<div class="abs" style="left:1746.3px;top:895.6px;width:16.4px;height:1.4px;background:#c5c5c5"></div>
<div class="abs" style="left:1753.8px;top:888px;width:1.4px;height:16.4px;background:#c5c5c5"></div>
<svg class="abs" style="left:1765px;top:886.5px;" width="20" height="20" viewBox="0 0 20 20"><path d="M5.4 8.6 L10 12.4 L14.6 8.6" fill="none" stroke="#c5c5c5" stroke-width="1.3"/></svg>
<svg class="abs" style="left:1796px;top:888px;" width="17.5" height="16.5" viewBox="0 0 17.5 16.5"><rect x="0.8" y="0.8" width="15.9" height="14.9" rx="1.8" fill="none" stroke="#c5c5c5" stroke-width="1.3"/><path d="M8.75 1 V15.5" stroke="#c5c5c5" stroke-width="1.3"/></svg>
<svg class="abs" style="left:1828px;top:887.5px;" width="15.5" height="17.5" viewBox="0 0 15.5 17.5"><path d="M0.8 3.8 H14.7 M5 3.5 V2 Q5 1 6 1 H9.5 Q10.5 1 10.5 2 V3.5 M2.4 4 V15 Q2.4 16.6 4 16.6 H11.5 Q13.1 16.6 13.1 15 V4 M5.4 6.5 V14 M7.75 6.5 V14 M10.1 6.5 V14" fill="none" stroke="#c5c5c5" stroke-width="1.3"/></svg>
<svg class="abs" style="left:1859px;top:886px;" width="20" height="20" viewBox="0 0 20 20"><path d="M4 11.65 L10 7.35 L16 11.65" fill="none" stroke="#c5c5c5" stroke-width="1.3"/></svg>
<svg class="abs" style="left:1886.4px;top:886.2px;" width="20" height="20" viewBox="0 0 20 20"><path d="M4.7 4.7 L15.3 15.3 M15.3 4.7 L4.7 15.3" fill="none" stroke="#c5c5c5" stroke-width="1.3"/></svg>
<div class="box" style="left:274px;top:39px;width:117px;height:40px"></div>
<div class="box g" style="left:1042px;top:39px;width:129px;height:40px"></div>
<div class="box g" style="left:75px;top:160px;width:134px;height:35px;border-width:4.5px"></div>
<div class="box" style="left:76px;top:217px;width:111px;height:35px;border-width:4.5px"></div>
<div class="box" style="left:384px;top:342px;width:313px;height:78px"></div>
<div class="box g" style="left:1150px;top:342px;width:400px;height:79px"></div>
</body></html>
